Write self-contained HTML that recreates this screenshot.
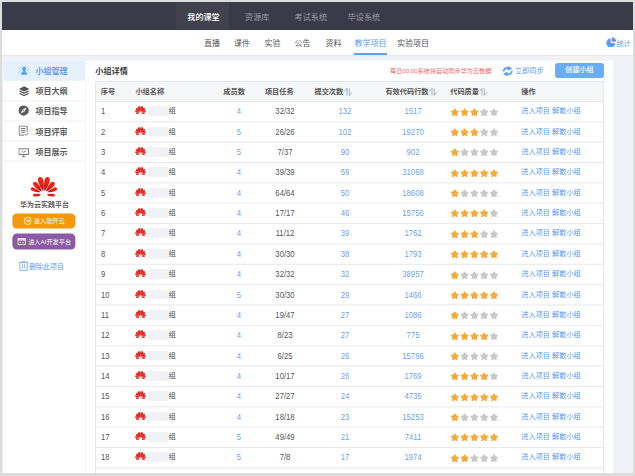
<!DOCTYPE html><html lang="zh"><head><meta charset="utf-8"><title>小组管理</title><style>
*{margin:0;padding:0;box-sizing:border-box}
html,body{width:635px;height:476px;overflow:hidden;background:#dcdcdc}
body{font-family:"Liberation Sans","Noto Sans CJK SC",sans-serif;position:relative;color:#444}
.a{position:absolute;white-space:nowrap}
#page{position:absolute;left:2px;top:2px;width:630.7px;height:471.2px;background:#f0f2f7;overflow:hidden}
#top{left:0;top:0;width:631px;height:28px;background:#3a3a48}
#top .act{left:174px;top:0;width:53px;height:28px;background:#42424f}
#top span{top:1.7px;height:28px;line-height:28px;font-size:8.1px;color:#9a9aa6;transform:translateX(-50%)}
#top span.on{color:#fff;font-weight:500}
#sub{left:0;top:28px;width:631px;height:25.5px;background:#fff;border-bottom:1px solid #e6e8ee}
#sub span{top:2.1px;height:24px;line-height:24px;font-size:8px;color:#555;transform:translateX(-50%)}
#sub span.on{color:#5b9cf0}
#side{left:1px;top:58px;transform:translate(0.4px,0.55px);width:82px;height:420px;background:#fff}
.si{left:0;width:82px;height:20.3px;border-bottom:1px solid #eef0f4;font-size:8px;font-weight:bold;color:#5c5c5c;line-height:20.6px}
.si b{position:absolute;left:32px;top:0.8px;font-weight:bold}
.si svg{position:absolute;left:15.3px;top:4.4px;width:11.5px;height:11.5px}
.si.on{background:#e6f1ff;color:#5b9cf0;border-bottom-color:#e6f1ff}
#main{left:82.8px;top:58px;transform:translateY(0.65px);width:528px;height:420px;background:#fff;border-left:1px solid #f5f6f8}
#tbl{left:92.8px;top:79.3px;width:509.2px;height:400px;border:1px solid #e6e7ea;border-bottom:0}
#thead{left:0;top:0;width:507.2px;height:19px;background:#f5f6f8}
.th{font-size:7.2px;font-weight:bold;color:#555;top:0;height:20px;line-height:20px}
.row{left:0;width:507.2px;font-size:8.4px;color:#555}
.row .a{top:-0.6px;height:20px;line-height:20px}
.c{transform:translateX(-50%) scaleX(0.92)}
.n{transform:scaleX(0.92);transform-origin:0 50%}
.bl{color:#6ba5ee}
.lk{font-size:7.2px;color:#5b9cf0}
.nm{font-size:7.3px;color:#555}
.blur{background:#f1f2f6;height:9.8px!important;top:4.4px!important}
</style></head><body><div id="page">
<div id="top" class="a"><div class="a act"></div>
<span class="a on" style="left:201.5px">我的课堂</span>
<span class="a" style="left:255.2px">资源库</span>
<span class="a" style="left:308.8px">考试系统</span>
<span class="a" style="left:361.9px">毕设系统</span>
</div>
<div id="sub" class="a">
<span class="a" style="left:210px">直播</span>
<span class="a" style="left:240px">课件</span>
<span class="a" style="left:270.5px">实验</span>
<span class="a" style="left:300.5px">公告</span>
<span class="a" style="left:331.5px">资料</span>
<span class="a on" style="left:368.5px">教学项目</span>
<span class="a" style="left:411px">实验项目</span>
<div class="a" style="left:352px;top:23.2px;width:33.4px;height:2.2px;background:#5ba2f3"></div>
<svg class="a" style="left:604px;top:6.5px;width:10.5px;height:10.5px" viewBox="0 0 20 20"><path d="M9 3 A8.5 8.5 0 1 0 17.5 12 L9 11 Z" fill="#5b9cf0"/><path d="M11 0.5 A8.5 8.5 0 0 1 19.5 9 L11 9 Z" fill="#5b9cf0"/></svg>
<span class="a" style="left:621.5px;font-size:7px;color:#5b9cf0">统计</span>
</div>
<div id="side" class="a">
<div class="a si on" style="top:0.00px"><svg viewBox="0 0 22 22" style="overflow:visible"><g fill="#5aa4f4"><ellipse cx="11" cy="7.8" rx="3.7" ry="4.2"/><path d="M5 19.5 C5 15.5 7 13.5 9.2 12.6 L8.8 10 L13.2 10 L13.2 12.6 C15 13.5 17 15.5 17 19.5 Z"/></g><g fill="none" stroke="#5aa4f4" stroke-width="1.5" opacity="0.55"><path d="M6.6 5.6 C4.6 4.6 2.6 6 2.6 8.2 C2.6 9.8 3.4 10.8 4.6 11.4 C2.4 12.6 0.6 14.6 0.2 17.6"/><path d="M15.4 5.6 C17.4 4.6 19.4 6 19.4 8.2 C19.4 9.8 18.6 10.8 17.4 11.4 C19.6 12.6 21.4 14.6 21.8 17.6"/></g></svg><b>小组管理</b></div>
<div class="a si" style="top:20.30px"><svg viewBox="0 0 22 22"><g fill="#555"><path d="M11 1.5 L21 6.5 L11 11.5 L1 6.5 Z"/><path d="M3.5 9.7 L1 11 L11 16 L21 11 L18.5 9.7 L11 13.5 Z"/><path d="M3.5 14.2 L1 15.5 L11 20.5 L21 15.5 L18.5 14.2 L11 18 Z"/></g></svg><b>项目大纲</b></div>
<div class="a si" style="top:40.60px"><svg viewBox="0 0 22 22"><circle cx="10" cy="9.4" r="9.9" fill="#5a5a5a"/><path d="M15.6 3.8 L11.8 11.2 L4.4 15 L8.2 7.6 Z" fill="#fff"/><circle cx="10" cy="9.4" r="1.3" fill="#5a5a5a"/></svg><b>项目指导</b></div>
<div class="a si" style="top:60.90px"><svg viewBox="0 0 22 22"><g fill="none" stroke="#5e5e5e" stroke-width="1.6"><path d="M16.8 12.5 V1 H1.4 V18.4 H11"/><path d="M5 5.6 H13.4 M5 9.2 H13.4 M5 12.8 H13.4"/><path d="M12.2 16.2 L14.8 18.8 L19.8 13.8"/></g></svg><b>项目评审</b></div>
<div class="a si" style="top:81.20px"><svg viewBox="0 0 22 22"><g fill="none" stroke="#5e5e5e" stroke-width="1.6"><rect x="1" y="4.4" width="18.4" height="10.6"/><path d="M10.2 15 V19.4 M6.6 19.6 H13.8"/><path d="M5.4 10.8 L8 9 L10.2 11.6 L12.4 8.6 L15 10.6" stroke-width="1.2"/></g></svg><b>项目展示</b></div>
<svg class="a" style="left:26.7px;top:115.8px;width:27px;height:20.5px" viewBox="0 0 40 30.5"><defs><linearGradient id="hg" x1="0" y1="0" x2="0" y2="1"><stop offset="0" stop-color="#ff2414"/><stop offset="0.5" stop-color="#f01a12"/><stop offset="1" stop-color="#9c0a08"/></linearGradient></defs><g fill="url(#hg)"><path d="M0,0 C-2.34,-4.80 -3.90,-10.90 -3.90,-16.57 C-3.90,-20.27 -2.18,-21.80 0,-21.80 C2.18,-21.80 3.90,-20.27 3.90,-16.57 C3.90,-10.90 2.34,-4.80 0,0 Z" transform="translate(19.00,22.00) rotate(-13.5)"/><path d="M0,0 C-1.98,-4.09 -3.30,-9.30 -3.30,-14.14 C-3.30,-17.30 -1.85,-18.60 0,-18.60 C1.85,-18.60 3.30,-17.30 3.30,-14.14 C3.30,-9.30 1.98,-4.09 0,0 Z" transform="translate(17.00,22.40) rotate(-41.0)"/><path d="M0,0 C-1.59,-3.43 -2.65,-7.80 -2.65,-11.86 C-2.65,-14.51 -1.48,-15.60 0,-15.60 C1.48,-15.60 2.65,-14.51 2.65,-11.86 C2.65,-7.80 1.59,-3.43 0,0 Z" transform="translate(15.00,23.50) rotate(-67.5)"/><path d="M0,0 C-1.50,-2.64 -2.50,-6.00 -2.50,-9.12 C-2.50,-11.16 -1.40,-12.00 0,-12.00 C1.40,-12.00 2.50,-11.16 2.50,-9.12 C2.50,-6.00 1.50,-2.64 0,0 Z" transform="translate(15.80,27.00) rotate(-97.0)"/><path d="M0,0 C-2.34,-4.80 -3.90,-10.90 -3.90,-16.57 C-3.90,-20.27 -2.18,-21.80 0,-21.80 C2.18,-21.80 3.90,-20.27 3.90,-16.57 C3.90,-10.90 2.34,-4.80 0,0 Z" transform="translate(21.00,22.00) rotate(13.5)"/><path d="M0,0 C-1.98,-4.09 -3.30,-9.30 -3.30,-14.14 C-3.30,-17.30 -1.85,-18.60 0,-18.60 C1.85,-18.60 3.30,-17.30 3.30,-14.14 C3.30,-9.30 1.98,-4.09 0,0 Z" transform="translate(23.00,22.40) rotate(41.0)"/><path d="M0,0 C-1.59,-3.43 -2.65,-7.80 -2.65,-11.86 C-2.65,-14.51 -1.48,-15.60 0,-15.60 C1.48,-15.60 2.65,-14.51 2.65,-11.86 C2.65,-7.80 1.59,-3.43 0,0 Z" transform="translate(25.00,23.50) rotate(67.5)"/><path d="M0,0 C-1.50,-2.64 -2.50,-6.00 -2.50,-9.12 C-2.50,-11.16 -1.40,-12.00 0,-12.00 C1.40,-12.00 2.50,-11.16 2.50,-9.12 C2.50,-6.00 1.50,-2.64 0,0 Z" transform="translate(24.20,27.00) rotate(97.0)"/></g></svg>
<div class="a" style="left:0;width:82px;top:138.8px;text-align:center;font-size:7px;font-weight:bold;color:#5a5a5a;line-height:9px">华为云实践平台</div>
<div class="a" style="left:9.1px;top:153.4px;width:63.4px;height:15px;border-radius:4.5px;background:#f49a08;color:#fff;font-size:6.2px;line-height:14.4px"><svg class="a" style="left:10.8px;top:3px;width:8.6px;height:8.6px" viewBox="0 0 16 16"><circle cx="8" cy="8" r="6.7" fill="none" stroke="#fff" stroke-width="1.6"/><path d="M4 8 H11 M8.5 5 L11.5 8 L8.5 11" fill="none" stroke="#fff" stroke-width="1.5"/></svg><span class="a" style="left:21.3px;top:0">进入软开云</span></div>
<div class="a" style="left:9.1px;top:173px;width:63.4px;height:15.5px;border-radius:4.5px;background:#8b59a6;color:#fff;font-size:6.2px;line-height:15.5px"><svg class="a" style="left:5.2px;top:3.5px;width:8.4px;height:8px" viewBox="0 0 16 15"><rect x="1" y="1.5" width="14" height="12" fill="none" stroke="#fff" stroke-width="1.6"/><path d="M1 4.5 H15" stroke="#fff" stroke-width="2.4"/><path d="M4 9.5 H7 M9 9.5 H12" stroke="#fff" stroke-width="1.4"/></svg><span class="a" style="left:15.7px;top:-0.3px">进入AI开发平台</span></div>
<svg class="a" style="left:15.3px;top:200.2px;width:10.4px;height:10.4px" viewBox="0 0 21 21"><path d="M0.5 3.8 H20.5 M8 3.8 V1.2 H13 V3.8 M3 3.8 V20 H18 V3.8 M8.2 7.5 V16.5 M12.8 7.5 V16.5" fill="none" stroke="#5b9ff2" stroke-width="1.5"/></svg>
<span class="a" style="left:25.6px;top:201px;font-size:7px;line-height:10px;color:#5b9cf0">删除此项目</span>
</div>
<div id="main" class="a"></div>
<div class="a" style="left:93.3px;top:64.3px;font-size:8.15px;font-weight:bold;color:#3a3a3a;line-height:12px">小组详情</div>
<div class="a" style="left:388px;top:64.2px;font-size:6.15px;color:#f46466;line-height:10px">每日00:00系统将自动同步华为云数据</div>
<svg class="a" style="left:499.8px;top:63.5px;width:11.4px;height:10.4px" viewBox="0 0 22 20"><g fill="none" stroke="#5ba2f3" stroke-width="3.6"><path d="M3 10.5 C3 5.5 8 2.8 13 4.2"/><path d="M19 9.5 C19 14.5 14 17.2 9 15.8"/></g><path d="M12.2 -0.3 L20.2 5.6 L11 8.8 Z" fill="#5ba2f3"/><path d="M9.8 20.3 L1.8 14.4 L11 11.2 Z" fill="#5ba2f3"/></svg>
<div class="a" style="left:513px;top:64px;font-size:7.15px;color:#5b9cf0;line-height:10px">立即同步</div>
<div class="a" style="left:553px;top:61px;width:49px;height:15px;border-radius:3px;background:#6aadf6;color:#fff;font-size:7.1px;font-weight:500;text-align:center;line-height:15.6px">创建小组</div>
<div id="tbl" class="a"><div id="thead" class="a">
<span class="a th" style="left:5px">序号</span>
<span class="a th" style="left:39.6px">小组名称</span>
<span class="a th" style="left:127.5px">成员数</span>
<span class="a th" style="left:169.1px">项目任务</span>
<span class="a th" style="left:218.7px">提交次数</span>
<span class="a th" style="left:289.6px">有效代码行数</span>
<span class="a th" style="left:354.4px">代码质量</span>
<span class="a th" style="left:425.5px">操作</span>
<svg class="a" style="left:246.8px;top:6px;width:9.5px;height:7.8px" viewBox="0 0 19 15.6"><path d="M8 1 V15 M8.3 0.8 L2.4 7.2" stroke="#5b9cf0" stroke-width="1.5" fill="none"/><path d="M12.6 0.6 V14.6 M12.3 14.8 L18.2 8.4" stroke="#9a9a9a" stroke-width="1.5" fill="none"/></svg>
<svg class="a" style="left:332.2px;top:6px;width:9.5px;height:7.8px" viewBox="0 0 19 15.6"><path d="M8 1 V15 M8.3 0.8 L2.4 7.2" stroke="#9a9a9a" stroke-width="1.5" fill="none"/><path d="M12.6 0.6 V14.6 M12.3 14.8 L18.2 8.4" stroke="#9a9a9a" stroke-width="1.5" fill="none"/></svg>
<svg class="a" style="left:382.4px;top:6px;width:9.5px;height:7.8px" viewBox="0 0 19 15.6"><path d="M8 1 V15 M8.3 0.8 L2.4 7.2" stroke="#9a9a9a" stroke-width="1.5" fill="none"/><path d="M12.6 0.6 V14.6 M12.3 14.8 L18.2 8.4" stroke="#9a9a9a" stroke-width="1.5" fill="none"/></svg>
</div>
<div class="a row" style="top:19.60px;height:20.36px">
<span class="a n" style="left:5px">1</span>
<svg class="a" style="left:39.4px;top:4.4px;width:11px;height:8.4px" viewBox="0 0 40 30.5"><g fill="#e8281f"><path d="M0,0 C-3.04,-4.80 -5.07,-10.90 -5.07,-16.57 C-5.07,-20.27 -2.84,-21.80 0,-21.80 C2.84,-21.80 5.07,-20.27 5.07,-16.57 C5.07,-10.90 3.04,-4.80 0,0 Z" transform="translate(18.70,22.00) rotate(-13.5)"/><path d="M0,0 C-2.57,-4.09 -4.29,-9.30 -4.29,-14.14 C-4.29,-17.30 -2.40,-18.60 0,-18.60 C2.40,-18.60 4.29,-17.30 4.29,-14.14 C4.29,-9.30 2.57,-4.09 0,0 Z" transform="translate(17.00,22.40) rotate(-41.0)"/><path d="M0,0 C-2.07,-3.43 -3.44,-7.80 -3.44,-11.86 C-3.44,-14.51 -1.93,-15.60 0,-15.60 C1.93,-15.60 3.44,-14.51 3.44,-11.86 C3.44,-7.80 2.07,-3.43 0,0 Z" transform="translate(15.00,23.50) rotate(-67.5)"/><path d="M0,0 C-1.95,-2.99 -3.25,-6.80 -3.25,-10.34 C-3.25,-12.65 -1.82,-13.60 0,-13.60 C1.82,-13.60 3.25,-12.65 3.25,-10.34 C3.25,-6.80 1.95,-2.99 0,0 Z" transform="translate(17.40,25.40) rotate(-92.2)"/><path d="M0,0 C-3.04,-4.80 -5.07,-10.90 -5.07,-16.57 C-5.07,-20.27 -2.84,-21.80 0,-21.80 C2.84,-21.80 5.07,-20.27 5.07,-16.57 C5.07,-10.90 3.04,-4.80 0,0 Z" transform="translate(21.30,22.00) rotate(13.5)"/><path d="M0,0 C-2.57,-4.09 -4.29,-9.30 -4.29,-14.14 C-4.29,-17.30 -2.40,-18.60 0,-18.60 C2.40,-18.60 4.29,-17.30 4.29,-14.14 C4.29,-9.30 2.57,-4.09 0,0 Z" transform="translate(23.00,22.40) rotate(41.0)"/><path d="M0,0 C-2.07,-3.43 -3.44,-7.80 -3.44,-11.86 C-3.44,-14.51 -1.93,-15.60 0,-15.60 C1.93,-15.60 3.44,-14.51 3.44,-11.86 C3.44,-7.80 2.07,-3.43 0,0 Z" transform="translate(25.00,23.50) rotate(67.5)"/><path d="M0,0 C-1.95,-2.99 -3.25,-6.80 -3.25,-10.34 C-3.25,-12.65 -1.82,-13.60 0,-13.60 C1.82,-13.60 3.25,-12.65 3.25,-10.34 C3.25,-6.80 1.95,-2.99 0,0 Z" transform="translate(22.60,25.40) rotate(92.2)"/></g></svg>
<span class="a blur" style="left:52.7px;width:20px"></span><span class="a nm" style="left:72.8px">组</span>
<span class="a c bl" style="left:143.5px">4</span>
<span class="a c" style="left:188.8px">32/32</span>
<span class="a c bl" style="left:249px">132</span>
<span class="a c bl" style="left:317px">1517</span>
<svg class="a" style="left:354.1px;top:4.8px;width:50px;height:10px" viewBox="0 0 50 10"><polygon points="4.80,1.95 5.93,3.95 8.18,4.40 6.62,6.09 6.89,8.37 4.80,7.42 2.71,8.37 2.98,6.09 1.42,4.40 3.67,3.95" fill="#f5aa3a" stroke="#f5aa3a" stroke-width="1.3" stroke-linejoin="round"/><polygon points="14.60,1.95 15.73,3.95 17.98,4.40 16.42,6.09 16.69,8.37 14.60,7.42 12.51,8.37 12.78,6.09 11.22,4.40 13.47,3.95" fill="#f5aa3a" stroke="#f5aa3a" stroke-width="1.3" stroke-linejoin="round"/><polygon points="24.40,1.95 25.53,3.95 27.78,4.40 26.22,6.09 26.49,8.37 24.40,7.42 22.31,8.37 22.58,6.09 21.02,4.40 23.27,3.95" fill="#f5aa3a" stroke="#f5aa3a" stroke-width="1.3" stroke-linejoin="round"/><polygon points="34.20,1.95 35.33,3.95 37.58,4.40 36.02,6.09 36.29,8.37 34.20,7.42 32.11,8.37 32.38,6.09 30.82,4.40 33.07,3.95" fill="#c8c8c8" stroke="#c8c8c8" stroke-width="1.3" stroke-linejoin="round"/><polygon points="44.00,1.95 45.13,3.95 47.38,4.40 45.82,6.09 46.09,8.37 44.00,7.42 41.91,8.37 42.18,6.09 40.62,4.40 42.87,3.95" fill="#c8c8c8" stroke="#c8c8c8" stroke-width="1.3" stroke-linejoin="round"/></svg>
<span class="a lk" style="left:425.5px">进入项目 解散小组</span>
</div>
<div class="a row" style="top:39.96px;height:20.36px">
<span class="a n" style="left:5px">2</span>
<svg class="a" style="left:39.4px;top:4.4px;width:11px;height:8.4px" viewBox="0 0 40 30.5"><g fill="#e8281f"><path d="M0,0 C-3.04,-4.80 -5.07,-10.90 -5.07,-16.57 C-5.07,-20.27 -2.84,-21.80 0,-21.80 C2.84,-21.80 5.07,-20.27 5.07,-16.57 C5.07,-10.90 3.04,-4.80 0,0 Z" transform="translate(18.70,22.00) rotate(-13.5)"/><path d="M0,0 C-2.57,-4.09 -4.29,-9.30 -4.29,-14.14 C-4.29,-17.30 -2.40,-18.60 0,-18.60 C2.40,-18.60 4.29,-17.30 4.29,-14.14 C4.29,-9.30 2.57,-4.09 0,0 Z" transform="translate(17.00,22.40) rotate(-41.0)"/><path d="M0,0 C-2.07,-3.43 -3.44,-7.80 -3.44,-11.86 C-3.44,-14.51 -1.93,-15.60 0,-15.60 C1.93,-15.60 3.44,-14.51 3.44,-11.86 C3.44,-7.80 2.07,-3.43 0,0 Z" transform="translate(15.00,23.50) rotate(-67.5)"/><path d="M0,0 C-1.95,-2.99 -3.25,-6.80 -3.25,-10.34 C-3.25,-12.65 -1.82,-13.60 0,-13.60 C1.82,-13.60 3.25,-12.65 3.25,-10.34 C3.25,-6.80 1.95,-2.99 0,0 Z" transform="translate(17.40,25.40) rotate(-92.2)"/><path d="M0,0 C-3.04,-4.80 -5.07,-10.90 -5.07,-16.57 C-5.07,-20.27 -2.84,-21.80 0,-21.80 C2.84,-21.80 5.07,-20.27 5.07,-16.57 C5.07,-10.90 3.04,-4.80 0,0 Z" transform="translate(21.30,22.00) rotate(13.5)"/><path d="M0,0 C-2.57,-4.09 -4.29,-9.30 -4.29,-14.14 C-4.29,-17.30 -2.40,-18.60 0,-18.60 C2.40,-18.60 4.29,-17.30 4.29,-14.14 C4.29,-9.30 2.57,-4.09 0,0 Z" transform="translate(23.00,22.40) rotate(41.0)"/><path d="M0,0 C-2.07,-3.43 -3.44,-7.80 -3.44,-11.86 C-3.44,-14.51 -1.93,-15.60 0,-15.60 C1.93,-15.60 3.44,-14.51 3.44,-11.86 C3.44,-7.80 2.07,-3.43 0,0 Z" transform="translate(25.00,23.50) rotate(67.5)"/><path d="M0,0 C-1.95,-2.99 -3.25,-6.80 -3.25,-10.34 C-3.25,-12.65 -1.82,-13.60 0,-13.60 C1.82,-13.60 3.25,-12.65 3.25,-10.34 C3.25,-6.80 1.95,-2.99 0,0 Z" transform="translate(22.60,25.40) rotate(92.2)"/></g></svg>
<span class="a blur" style="left:52.7px;width:20px"></span><span class="a nm" style="left:72.8px">组</span>
<span class="a c bl" style="left:143.5px">5</span>
<span class="a c" style="left:188.8px">26/26</span>
<span class="a c bl" style="left:249px">102</span>
<span class="a c bl" style="left:317px">19270</span>
<svg class="a" style="left:354.1px;top:4.8px;width:50px;height:10px" viewBox="0 0 50 10"><polygon points="4.80,1.95 5.93,3.95 8.18,4.40 6.62,6.09 6.89,8.37 4.80,7.42 2.71,8.37 2.98,6.09 1.42,4.40 3.67,3.95" fill="#f5aa3a" stroke="#f5aa3a" stroke-width="1.3" stroke-linejoin="round"/><polygon points="14.60,1.95 15.73,3.95 17.98,4.40 16.42,6.09 16.69,8.37 14.60,7.42 12.51,8.37 12.78,6.09 11.22,4.40 13.47,3.95" fill="#f5aa3a" stroke="#f5aa3a" stroke-width="1.3" stroke-linejoin="round"/><polygon points="24.40,1.95 25.53,3.95 27.78,4.40 26.22,6.09 26.49,8.37 24.40,7.42 22.31,8.37 22.58,6.09 21.02,4.40 23.27,3.95" fill="#f5aa3a" stroke="#f5aa3a" stroke-width="1.3" stroke-linejoin="round"/><polygon points="34.20,1.95 35.33,3.95 37.58,4.40 36.02,6.09 36.29,8.37 34.20,7.42 32.11,8.37 32.38,6.09 30.82,4.40 33.07,3.95" fill="#c8c8c8" stroke="#c8c8c8" stroke-width="1.3" stroke-linejoin="round"/><polygon points="44.00,1.95 45.13,3.95 47.38,4.40 45.82,6.09 46.09,8.37 44.00,7.42 41.91,8.37 42.18,6.09 40.62,4.40 42.87,3.95" fill="#c8c8c8" stroke="#c8c8c8" stroke-width="1.3" stroke-linejoin="round"/></svg>
<span class="a lk" style="left:425.5px">进入项目 解散小组</span>
</div>
<div class="a row" style="top:60.32px;height:20.36px">
<span class="a n" style="left:5px">3</span>
<svg class="a" style="left:39.4px;top:4.4px;width:11px;height:8.4px" viewBox="0 0 40 30.5"><g fill="#e8281f"><path d="M0,0 C-3.04,-4.80 -5.07,-10.90 -5.07,-16.57 C-5.07,-20.27 -2.84,-21.80 0,-21.80 C2.84,-21.80 5.07,-20.27 5.07,-16.57 C5.07,-10.90 3.04,-4.80 0,0 Z" transform="translate(18.70,22.00) rotate(-13.5)"/><path d="M0,0 C-2.57,-4.09 -4.29,-9.30 -4.29,-14.14 C-4.29,-17.30 -2.40,-18.60 0,-18.60 C2.40,-18.60 4.29,-17.30 4.29,-14.14 C4.29,-9.30 2.57,-4.09 0,0 Z" transform="translate(17.00,22.40) rotate(-41.0)"/><path d="M0,0 C-2.07,-3.43 -3.44,-7.80 -3.44,-11.86 C-3.44,-14.51 -1.93,-15.60 0,-15.60 C1.93,-15.60 3.44,-14.51 3.44,-11.86 C3.44,-7.80 2.07,-3.43 0,0 Z" transform="translate(15.00,23.50) rotate(-67.5)"/><path d="M0,0 C-1.95,-2.99 -3.25,-6.80 -3.25,-10.34 C-3.25,-12.65 -1.82,-13.60 0,-13.60 C1.82,-13.60 3.25,-12.65 3.25,-10.34 C3.25,-6.80 1.95,-2.99 0,0 Z" transform="translate(17.40,25.40) rotate(-92.2)"/><path d="M0,0 C-3.04,-4.80 -5.07,-10.90 -5.07,-16.57 C-5.07,-20.27 -2.84,-21.80 0,-21.80 C2.84,-21.80 5.07,-20.27 5.07,-16.57 C5.07,-10.90 3.04,-4.80 0,0 Z" transform="translate(21.30,22.00) rotate(13.5)"/><path d="M0,0 C-2.57,-4.09 -4.29,-9.30 -4.29,-14.14 C-4.29,-17.30 -2.40,-18.60 0,-18.60 C2.40,-18.60 4.29,-17.30 4.29,-14.14 C4.29,-9.30 2.57,-4.09 0,0 Z" transform="translate(23.00,22.40) rotate(41.0)"/><path d="M0,0 C-2.07,-3.43 -3.44,-7.80 -3.44,-11.86 C-3.44,-14.51 -1.93,-15.60 0,-15.60 C1.93,-15.60 3.44,-14.51 3.44,-11.86 C3.44,-7.80 2.07,-3.43 0,0 Z" transform="translate(25.00,23.50) rotate(67.5)"/><path d="M0,0 C-1.95,-2.99 -3.25,-6.80 -3.25,-10.34 C-3.25,-12.65 -1.82,-13.60 0,-13.60 C1.82,-13.60 3.25,-12.65 3.25,-10.34 C3.25,-6.80 1.95,-2.99 0,0 Z" transform="translate(22.60,25.40) rotate(92.2)"/></g></svg>
<span class="a blur" style="left:52.7px;width:20px"></span><span class="a nm" style="left:72.8px">组</span>
<span class="a c bl" style="left:143.5px">5</span>
<span class="a c" style="left:188.8px">7/37</span>
<span class="a c bl" style="left:249px">90</span>
<span class="a c bl" style="left:317px">902</span>
<svg class="a" style="left:354.1px;top:4.8px;width:50px;height:10px" viewBox="0 0 50 10"><polygon points="4.80,1.95 5.93,3.95 8.18,4.40 6.62,6.09 6.89,8.37 4.80,7.42 2.71,8.37 2.98,6.09 1.42,4.40 3.67,3.95" fill="#f5aa3a" stroke="#f5aa3a" stroke-width="1.3" stroke-linejoin="round"/><polygon points="14.60,1.95 15.73,3.95 17.98,4.40 16.42,6.09 16.69,8.37 14.60,7.42 12.51,8.37 12.78,6.09 11.22,4.40 13.47,3.95" fill="#c8c8c8" stroke="#c8c8c8" stroke-width="1.3" stroke-linejoin="round"/><polygon points="24.40,1.95 25.53,3.95 27.78,4.40 26.22,6.09 26.49,8.37 24.40,7.42 22.31,8.37 22.58,6.09 21.02,4.40 23.27,3.95" fill="#c8c8c8" stroke="#c8c8c8" stroke-width="1.3" stroke-linejoin="round"/><polygon points="34.20,1.95 35.33,3.95 37.58,4.40 36.02,6.09 36.29,8.37 34.20,7.42 32.11,8.37 32.38,6.09 30.82,4.40 33.07,3.95" fill="#c8c8c8" stroke="#c8c8c8" stroke-width="1.3" stroke-linejoin="round"/><polygon points="44.00,1.95 45.13,3.95 47.38,4.40 45.82,6.09 46.09,8.37 44.00,7.42 41.91,8.37 42.18,6.09 40.62,4.40 42.87,3.95" fill="#c8c8c8" stroke="#c8c8c8" stroke-width="1.3" stroke-linejoin="round"/></svg>
<span class="a lk" style="left:425.5px">进入项目 解散小组</span>
</div>
<div class="a row" style="top:80.68px;height:20.36px">
<span class="a n" style="left:5px">4</span>
<svg class="a" style="left:39.4px;top:4.4px;width:11px;height:8.4px" viewBox="0 0 40 30.5"><g fill="#e8281f"><path d="M0,0 C-3.04,-4.80 -5.07,-10.90 -5.07,-16.57 C-5.07,-20.27 -2.84,-21.80 0,-21.80 C2.84,-21.80 5.07,-20.27 5.07,-16.57 C5.07,-10.90 3.04,-4.80 0,0 Z" transform="translate(18.70,22.00) rotate(-13.5)"/><path d="M0,0 C-2.57,-4.09 -4.29,-9.30 -4.29,-14.14 C-4.29,-17.30 -2.40,-18.60 0,-18.60 C2.40,-18.60 4.29,-17.30 4.29,-14.14 C4.29,-9.30 2.57,-4.09 0,0 Z" transform="translate(17.00,22.40) rotate(-41.0)"/><path d="M0,0 C-2.07,-3.43 -3.44,-7.80 -3.44,-11.86 C-3.44,-14.51 -1.93,-15.60 0,-15.60 C1.93,-15.60 3.44,-14.51 3.44,-11.86 C3.44,-7.80 2.07,-3.43 0,0 Z" transform="translate(15.00,23.50) rotate(-67.5)"/><path d="M0,0 C-1.95,-2.99 -3.25,-6.80 -3.25,-10.34 C-3.25,-12.65 -1.82,-13.60 0,-13.60 C1.82,-13.60 3.25,-12.65 3.25,-10.34 C3.25,-6.80 1.95,-2.99 0,0 Z" transform="translate(17.40,25.40) rotate(-92.2)"/><path d="M0,0 C-3.04,-4.80 -5.07,-10.90 -5.07,-16.57 C-5.07,-20.27 -2.84,-21.80 0,-21.80 C2.84,-21.80 5.07,-20.27 5.07,-16.57 C5.07,-10.90 3.04,-4.80 0,0 Z" transform="translate(21.30,22.00) rotate(13.5)"/><path d="M0,0 C-2.57,-4.09 -4.29,-9.30 -4.29,-14.14 C-4.29,-17.30 -2.40,-18.60 0,-18.60 C2.40,-18.60 4.29,-17.30 4.29,-14.14 C4.29,-9.30 2.57,-4.09 0,0 Z" transform="translate(23.00,22.40) rotate(41.0)"/><path d="M0,0 C-2.07,-3.43 -3.44,-7.80 -3.44,-11.86 C-3.44,-14.51 -1.93,-15.60 0,-15.60 C1.93,-15.60 3.44,-14.51 3.44,-11.86 C3.44,-7.80 2.07,-3.43 0,0 Z" transform="translate(25.00,23.50) rotate(67.5)"/><path d="M0,0 C-1.95,-2.99 -3.25,-6.80 -3.25,-10.34 C-3.25,-12.65 -1.82,-13.60 0,-13.60 C1.82,-13.60 3.25,-12.65 3.25,-10.34 C3.25,-6.80 1.95,-2.99 0,0 Z" transform="translate(22.60,25.40) rotate(92.2)"/></g></svg>
<span class="a blur" style="left:52.7px;width:20px"></span><span class="a nm" style="left:72.8px">组</span>
<span class="a c bl" style="left:143.5px">4</span>
<span class="a c" style="left:188.8px">39/39</span>
<span class="a c bl" style="left:249px">59</span>
<span class="a c bl" style="left:317px">31068</span>
<svg class="a" style="left:354.1px;top:4.8px;width:50px;height:10px" viewBox="0 0 50 10"><polygon points="4.80,1.95 5.93,3.95 8.18,4.40 6.62,6.09 6.89,8.37 4.80,7.42 2.71,8.37 2.98,6.09 1.42,4.40 3.67,3.95" fill="#f5aa3a" stroke="#f5aa3a" stroke-width="1.3" stroke-linejoin="round"/><polygon points="14.60,1.95 15.73,3.95 17.98,4.40 16.42,6.09 16.69,8.37 14.60,7.42 12.51,8.37 12.78,6.09 11.22,4.40 13.47,3.95" fill="#f5aa3a" stroke="#f5aa3a" stroke-width="1.3" stroke-linejoin="round"/><polygon points="24.40,1.95 25.53,3.95 27.78,4.40 26.22,6.09 26.49,8.37 24.40,7.42 22.31,8.37 22.58,6.09 21.02,4.40 23.27,3.95" fill="#f5aa3a" stroke="#f5aa3a" stroke-width="1.3" stroke-linejoin="round"/><polygon points="34.20,1.95 35.33,3.95 37.58,4.40 36.02,6.09 36.29,8.37 34.20,7.42 32.11,8.37 32.38,6.09 30.82,4.40 33.07,3.95" fill="#f5aa3a" stroke="#f5aa3a" stroke-width="1.3" stroke-linejoin="round"/><polygon points="44.00,1.95 45.13,3.95 47.38,4.40 45.82,6.09 46.09,8.37 44.00,7.42 41.91,8.37 42.18,6.09 40.62,4.40 42.87,3.95" fill="#f5aa3a" stroke="#f5aa3a" stroke-width="1.3" stroke-linejoin="round"/></svg>
<span class="a lk" style="left:425.5px">进入项目 解散小组</span>
</div>
<div class="a row" style="top:101.04px;height:20.36px">
<span class="a n" style="left:5px">5</span>
<svg class="a" style="left:39.4px;top:4.4px;width:11px;height:8.4px" viewBox="0 0 40 30.5"><g fill="#e8281f"><path d="M0,0 C-3.04,-4.80 -5.07,-10.90 -5.07,-16.57 C-5.07,-20.27 -2.84,-21.80 0,-21.80 C2.84,-21.80 5.07,-20.27 5.07,-16.57 C5.07,-10.90 3.04,-4.80 0,0 Z" transform="translate(18.70,22.00) rotate(-13.5)"/><path d="M0,0 C-2.57,-4.09 -4.29,-9.30 -4.29,-14.14 C-4.29,-17.30 -2.40,-18.60 0,-18.60 C2.40,-18.60 4.29,-17.30 4.29,-14.14 C4.29,-9.30 2.57,-4.09 0,0 Z" transform="translate(17.00,22.40) rotate(-41.0)"/><path d="M0,0 C-2.07,-3.43 -3.44,-7.80 -3.44,-11.86 C-3.44,-14.51 -1.93,-15.60 0,-15.60 C1.93,-15.60 3.44,-14.51 3.44,-11.86 C3.44,-7.80 2.07,-3.43 0,0 Z" transform="translate(15.00,23.50) rotate(-67.5)"/><path d="M0,0 C-1.95,-2.99 -3.25,-6.80 -3.25,-10.34 C-3.25,-12.65 -1.82,-13.60 0,-13.60 C1.82,-13.60 3.25,-12.65 3.25,-10.34 C3.25,-6.80 1.95,-2.99 0,0 Z" transform="translate(17.40,25.40) rotate(-92.2)"/><path d="M0,0 C-3.04,-4.80 -5.07,-10.90 -5.07,-16.57 C-5.07,-20.27 -2.84,-21.80 0,-21.80 C2.84,-21.80 5.07,-20.27 5.07,-16.57 C5.07,-10.90 3.04,-4.80 0,0 Z" transform="translate(21.30,22.00) rotate(13.5)"/><path d="M0,0 C-2.57,-4.09 -4.29,-9.30 -4.29,-14.14 C-4.29,-17.30 -2.40,-18.60 0,-18.60 C2.40,-18.60 4.29,-17.30 4.29,-14.14 C4.29,-9.30 2.57,-4.09 0,0 Z" transform="translate(23.00,22.40) rotate(41.0)"/><path d="M0,0 C-2.07,-3.43 -3.44,-7.80 -3.44,-11.86 C-3.44,-14.51 -1.93,-15.60 0,-15.60 C1.93,-15.60 3.44,-14.51 3.44,-11.86 C3.44,-7.80 2.07,-3.43 0,0 Z" transform="translate(25.00,23.50) rotate(67.5)"/><path d="M0,0 C-1.95,-2.99 -3.25,-6.80 -3.25,-10.34 C-3.25,-12.65 -1.82,-13.60 0,-13.60 C1.82,-13.60 3.25,-12.65 3.25,-10.34 C3.25,-6.80 1.95,-2.99 0,0 Z" transform="translate(22.60,25.40) rotate(92.2)"/></g></svg>
<span class="a blur" style="left:52.7px;width:20px"></span><span class="a nm" style="left:72.8px">组</span>
<span class="a c bl" style="left:143.5px">4</span>
<span class="a c" style="left:188.8px">64/64</span>
<span class="a c bl" style="left:249px">50</span>
<span class="a c bl" style="left:317px">18608</span>
<svg class="a" style="left:354.1px;top:4.8px;width:50px;height:10px" viewBox="0 0 50 10"><polygon points="4.80,1.95 5.93,3.95 8.18,4.40 6.62,6.09 6.89,8.37 4.80,7.42 2.71,8.37 2.98,6.09 1.42,4.40 3.67,3.95" fill="#f5aa3a" stroke="#f5aa3a" stroke-width="1.3" stroke-linejoin="round"/><polygon points="14.60,1.95 15.73,3.95 17.98,4.40 16.42,6.09 16.69,8.37 14.60,7.42 12.51,8.37 12.78,6.09 11.22,4.40 13.47,3.95" fill="#c8c8c8" stroke="#c8c8c8" stroke-width="1.3" stroke-linejoin="round"/><polygon points="24.40,1.95 25.53,3.95 27.78,4.40 26.22,6.09 26.49,8.37 24.40,7.42 22.31,8.37 22.58,6.09 21.02,4.40 23.27,3.95" fill="#c8c8c8" stroke="#c8c8c8" stroke-width="1.3" stroke-linejoin="round"/><polygon points="34.20,1.95 35.33,3.95 37.58,4.40 36.02,6.09 36.29,8.37 34.20,7.42 32.11,8.37 32.38,6.09 30.82,4.40 33.07,3.95" fill="#c8c8c8" stroke="#c8c8c8" stroke-width="1.3" stroke-linejoin="round"/><polygon points="44.00,1.95 45.13,3.95 47.38,4.40 45.82,6.09 46.09,8.37 44.00,7.42 41.91,8.37 42.18,6.09 40.62,4.40 42.87,3.95" fill="#c8c8c8" stroke="#c8c8c8" stroke-width="1.3" stroke-linejoin="round"/></svg>
<span class="a lk" style="left:425.5px">进入项目 解散小组</span>
</div>
<div class="a row" style="top:121.40px;height:20.36px">
<span class="a n" style="left:5px">6</span>
<svg class="a" style="left:39.4px;top:4.4px;width:11px;height:8.4px" viewBox="0 0 40 30.5"><g fill="#e8281f"><path d="M0,0 C-3.04,-4.80 -5.07,-10.90 -5.07,-16.57 C-5.07,-20.27 -2.84,-21.80 0,-21.80 C2.84,-21.80 5.07,-20.27 5.07,-16.57 C5.07,-10.90 3.04,-4.80 0,0 Z" transform="translate(18.70,22.00) rotate(-13.5)"/><path d="M0,0 C-2.57,-4.09 -4.29,-9.30 -4.29,-14.14 C-4.29,-17.30 -2.40,-18.60 0,-18.60 C2.40,-18.60 4.29,-17.30 4.29,-14.14 C4.29,-9.30 2.57,-4.09 0,0 Z" transform="translate(17.00,22.40) rotate(-41.0)"/><path d="M0,0 C-2.07,-3.43 -3.44,-7.80 -3.44,-11.86 C-3.44,-14.51 -1.93,-15.60 0,-15.60 C1.93,-15.60 3.44,-14.51 3.44,-11.86 C3.44,-7.80 2.07,-3.43 0,0 Z" transform="translate(15.00,23.50) rotate(-67.5)"/><path d="M0,0 C-1.95,-2.99 -3.25,-6.80 -3.25,-10.34 C-3.25,-12.65 -1.82,-13.60 0,-13.60 C1.82,-13.60 3.25,-12.65 3.25,-10.34 C3.25,-6.80 1.95,-2.99 0,0 Z" transform="translate(17.40,25.40) rotate(-92.2)"/><path d="M0,0 C-3.04,-4.80 -5.07,-10.90 -5.07,-16.57 C-5.07,-20.27 -2.84,-21.80 0,-21.80 C2.84,-21.80 5.07,-20.27 5.07,-16.57 C5.07,-10.90 3.04,-4.80 0,0 Z" transform="translate(21.30,22.00) rotate(13.5)"/><path d="M0,0 C-2.57,-4.09 -4.29,-9.30 -4.29,-14.14 C-4.29,-17.30 -2.40,-18.60 0,-18.60 C2.40,-18.60 4.29,-17.30 4.29,-14.14 C4.29,-9.30 2.57,-4.09 0,0 Z" transform="translate(23.00,22.40) rotate(41.0)"/><path d="M0,0 C-2.07,-3.43 -3.44,-7.80 -3.44,-11.86 C-3.44,-14.51 -1.93,-15.60 0,-15.60 C1.93,-15.60 3.44,-14.51 3.44,-11.86 C3.44,-7.80 2.07,-3.43 0,0 Z" transform="translate(25.00,23.50) rotate(67.5)"/><path d="M0,0 C-1.95,-2.99 -3.25,-6.80 -3.25,-10.34 C-3.25,-12.65 -1.82,-13.60 0,-13.60 C1.82,-13.60 3.25,-12.65 3.25,-10.34 C3.25,-6.80 1.95,-2.99 0,0 Z" transform="translate(22.60,25.40) rotate(92.2)"/></g></svg>
<span class="a blur" style="left:52.7px;width:20px"></span><span class="a nm" style="left:72.8px">组</span>
<span class="a c bl" style="left:143.5px">4</span>
<span class="a c" style="left:188.8px">17/17</span>
<span class="a c bl" style="left:249px">46</span>
<span class="a c bl" style="left:317px">15756</span>
<svg class="a" style="left:354.1px;top:4.8px;width:50px;height:10px" viewBox="0 0 50 10"><polygon points="4.80,1.95 5.93,3.95 8.18,4.40 6.62,6.09 6.89,8.37 4.80,7.42 2.71,8.37 2.98,6.09 1.42,4.40 3.67,3.95" fill="#f5aa3a" stroke="#f5aa3a" stroke-width="1.3" stroke-linejoin="round"/><polygon points="14.60,1.95 15.73,3.95 17.98,4.40 16.42,6.09 16.69,8.37 14.60,7.42 12.51,8.37 12.78,6.09 11.22,4.40 13.47,3.95" fill="#f5aa3a" stroke="#f5aa3a" stroke-width="1.3" stroke-linejoin="round"/><polygon points="24.40,1.95 25.53,3.95 27.78,4.40 26.22,6.09 26.49,8.37 24.40,7.42 22.31,8.37 22.58,6.09 21.02,4.40 23.27,3.95" fill="#f5aa3a" stroke="#f5aa3a" stroke-width="1.3" stroke-linejoin="round"/><polygon points="34.20,1.95 35.33,3.95 37.58,4.40 36.02,6.09 36.29,8.37 34.20,7.42 32.11,8.37 32.38,6.09 30.82,4.40 33.07,3.95" fill="#f5aa3a" stroke="#f5aa3a" stroke-width="1.3" stroke-linejoin="round"/><polygon points="44.00,1.95 45.13,3.95 47.38,4.40 45.82,6.09 46.09,8.37 44.00,7.42 41.91,8.37 42.18,6.09 40.62,4.40 42.87,3.95" fill="#c8c8c8" stroke="#c8c8c8" stroke-width="1.3" stroke-linejoin="round"/></svg>
<span class="a lk" style="left:425.5px">进入项目 解散小组</span>
</div>
<div class="a row" style="top:141.76px;height:20.36px">
<span class="a n" style="left:5px">7</span>
<svg class="a" style="left:39.4px;top:4.4px;width:11px;height:8.4px" viewBox="0 0 40 30.5"><g fill="#e8281f"><path d="M0,0 C-3.04,-4.80 -5.07,-10.90 -5.07,-16.57 C-5.07,-20.27 -2.84,-21.80 0,-21.80 C2.84,-21.80 5.07,-20.27 5.07,-16.57 C5.07,-10.90 3.04,-4.80 0,0 Z" transform="translate(18.70,22.00) rotate(-13.5)"/><path d="M0,0 C-2.57,-4.09 -4.29,-9.30 -4.29,-14.14 C-4.29,-17.30 -2.40,-18.60 0,-18.60 C2.40,-18.60 4.29,-17.30 4.29,-14.14 C4.29,-9.30 2.57,-4.09 0,0 Z" transform="translate(17.00,22.40) rotate(-41.0)"/><path d="M0,0 C-2.07,-3.43 -3.44,-7.80 -3.44,-11.86 C-3.44,-14.51 -1.93,-15.60 0,-15.60 C1.93,-15.60 3.44,-14.51 3.44,-11.86 C3.44,-7.80 2.07,-3.43 0,0 Z" transform="translate(15.00,23.50) rotate(-67.5)"/><path d="M0,0 C-1.95,-2.99 -3.25,-6.80 -3.25,-10.34 C-3.25,-12.65 -1.82,-13.60 0,-13.60 C1.82,-13.60 3.25,-12.65 3.25,-10.34 C3.25,-6.80 1.95,-2.99 0,0 Z" transform="translate(17.40,25.40) rotate(-92.2)"/><path d="M0,0 C-3.04,-4.80 -5.07,-10.90 -5.07,-16.57 C-5.07,-20.27 -2.84,-21.80 0,-21.80 C2.84,-21.80 5.07,-20.27 5.07,-16.57 C5.07,-10.90 3.04,-4.80 0,0 Z" transform="translate(21.30,22.00) rotate(13.5)"/><path d="M0,0 C-2.57,-4.09 -4.29,-9.30 -4.29,-14.14 C-4.29,-17.30 -2.40,-18.60 0,-18.60 C2.40,-18.60 4.29,-17.30 4.29,-14.14 C4.29,-9.30 2.57,-4.09 0,0 Z" transform="translate(23.00,22.40) rotate(41.0)"/><path d="M0,0 C-2.07,-3.43 -3.44,-7.80 -3.44,-11.86 C-3.44,-14.51 -1.93,-15.60 0,-15.60 C1.93,-15.60 3.44,-14.51 3.44,-11.86 C3.44,-7.80 2.07,-3.43 0,0 Z" transform="translate(25.00,23.50) rotate(67.5)"/><path d="M0,0 C-1.95,-2.99 -3.25,-6.80 -3.25,-10.34 C-3.25,-12.65 -1.82,-13.60 0,-13.60 C1.82,-13.60 3.25,-12.65 3.25,-10.34 C3.25,-6.80 1.95,-2.99 0,0 Z" transform="translate(22.60,25.40) rotate(92.2)"/></g></svg>
<span class="a blur" style="left:52.7px;width:20px"></span><span class="a nm" style="left:72.8px">组</span>
<span class="a c bl" style="left:143.5px">4</span>
<span class="a c" style="left:188.8px">11/12</span>
<span class="a c bl" style="left:249px">39</span>
<span class="a c bl" style="left:317px">1762</span>
<svg class="a" style="left:354.1px;top:4.8px;width:50px;height:10px" viewBox="0 0 50 10"><polygon points="4.80,1.95 5.93,3.95 8.18,4.40 6.62,6.09 6.89,8.37 4.80,7.42 2.71,8.37 2.98,6.09 1.42,4.40 3.67,3.95" fill="#f5aa3a" stroke="#f5aa3a" stroke-width="1.3" stroke-linejoin="round"/><polygon points="14.60,1.95 15.73,3.95 17.98,4.40 16.42,6.09 16.69,8.37 14.60,7.42 12.51,8.37 12.78,6.09 11.22,4.40 13.47,3.95" fill="#f5aa3a" stroke="#f5aa3a" stroke-width="1.3" stroke-linejoin="round"/><polygon points="24.40,1.95 25.53,3.95 27.78,4.40 26.22,6.09 26.49,8.37 24.40,7.42 22.31,8.37 22.58,6.09 21.02,4.40 23.27,3.95" fill="#f5aa3a" stroke="#f5aa3a" stroke-width="1.3" stroke-linejoin="round"/><polygon points="34.20,1.95 35.33,3.95 37.58,4.40 36.02,6.09 36.29,8.37 34.20,7.42 32.11,8.37 32.38,6.09 30.82,4.40 33.07,3.95" fill="#c8c8c8" stroke="#c8c8c8" stroke-width="1.3" stroke-linejoin="round"/><polygon points="44.00,1.95 45.13,3.95 47.38,4.40 45.82,6.09 46.09,8.37 44.00,7.42 41.91,8.37 42.18,6.09 40.62,4.40 42.87,3.95" fill="#c8c8c8" stroke="#c8c8c8" stroke-width="1.3" stroke-linejoin="round"/></svg>
<span class="a lk" style="left:425.5px">进入项目 解散小组</span>
</div>
<div class="a row" style="top:162.12px;height:20.36px">
<span class="a n" style="left:5px">8</span>
<svg class="a" style="left:39.4px;top:4.4px;width:11px;height:8.4px" viewBox="0 0 40 30.5"><g fill="#e8281f"><path d="M0,0 C-3.04,-4.80 -5.07,-10.90 -5.07,-16.57 C-5.07,-20.27 -2.84,-21.80 0,-21.80 C2.84,-21.80 5.07,-20.27 5.07,-16.57 C5.07,-10.90 3.04,-4.80 0,0 Z" transform="translate(18.70,22.00) rotate(-13.5)"/><path d="M0,0 C-2.57,-4.09 -4.29,-9.30 -4.29,-14.14 C-4.29,-17.30 -2.40,-18.60 0,-18.60 C2.40,-18.60 4.29,-17.30 4.29,-14.14 C4.29,-9.30 2.57,-4.09 0,0 Z" transform="translate(17.00,22.40) rotate(-41.0)"/><path d="M0,0 C-2.07,-3.43 -3.44,-7.80 -3.44,-11.86 C-3.44,-14.51 -1.93,-15.60 0,-15.60 C1.93,-15.60 3.44,-14.51 3.44,-11.86 C3.44,-7.80 2.07,-3.43 0,0 Z" transform="translate(15.00,23.50) rotate(-67.5)"/><path d="M0,0 C-1.95,-2.99 -3.25,-6.80 -3.25,-10.34 C-3.25,-12.65 -1.82,-13.60 0,-13.60 C1.82,-13.60 3.25,-12.65 3.25,-10.34 C3.25,-6.80 1.95,-2.99 0,0 Z" transform="translate(17.40,25.40) rotate(-92.2)"/><path d="M0,0 C-3.04,-4.80 -5.07,-10.90 -5.07,-16.57 C-5.07,-20.27 -2.84,-21.80 0,-21.80 C2.84,-21.80 5.07,-20.27 5.07,-16.57 C5.07,-10.90 3.04,-4.80 0,0 Z" transform="translate(21.30,22.00) rotate(13.5)"/><path d="M0,0 C-2.57,-4.09 -4.29,-9.30 -4.29,-14.14 C-4.29,-17.30 -2.40,-18.60 0,-18.60 C2.40,-18.60 4.29,-17.30 4.29,-14.14 C4.29,-9.30 2.57,-4.09 0,0 Z" transform="translate(23.00,22.40) rotate(41.0)"/><path d="M0,0 C-2.07,-3.43 -3.44,-7.80 -3.44,-11.86 C-3.44,-14.51 -1.93,-15.60 0,-15.60 C1.93,-15.60 3.44,-14.51 3.44,-11.86 C3.44,-7.80 2.07,-3.43 0,0 Z" transform="translate(25.00,23.50) rotate(67.5)"/><path d="M0,0 C-1.95,-2.99 -3.25,-6.80 -3.25,-10.34 C-3.25,-12.65 -1.82,-13.60 0,-13.60 C1.82,-13.60 3.25,-12.65 3.25,-10.34 C3.25,-6.80 1.95,-2.99 0,0 Z" transform="translate(22.60,25.40) rotate(92.2)"/></g></svg>
<span class="a blur" style="left:52.7px;width:20px"></span><span class="a nm" style="left:72.8px">组</span>
<span class="a c bl" style="left:143.5px">4</span>
<span class="a c" style="left:188.8px">30/30</span>
<span class="a c bl" style="left:249px">38</span>
<span class="a c bl" style="left:317px">1793</span>
<svg class="a" style="left:354.1px;top:4.8px;width:50px;height:10px" viewBox="0 0 50 10"><polygon points="4.80,1.95 5.93,3.95 8.18,4.40 6.62,6.09 6.89,8.37 4.80,7.42 2.71,8.37 2.98,6.09 1.42,4.40 3.67,3.95" fill="#f5aa3a" stroke="#f5aa3a" stroke-width="1.3" stroke-linejoin="round"/><polygon points="14.60,1.95 15.73,3.95 17.98,4.40 16.42,6.09 16.69,8.37 14.60,7.42 12.51,8.37 12.78,6.09 11.22,4.40 13.47,3.95" fill="#f5aa3a" stroke="#f5aa3a" stroke-width="1.3" stroke-linejoin="round"/><polygon points="24.40,1.95 25.53,3.95 27.78,4.40 26.22,6.09 26.49,8.37 24.40,7.42 22.31,8.37 22.58,6.09 21.02,4.40 23.27,3.95" fill="#f5aa3a" stroke="#f5aa3a" stroke-width="1.3" stroke-linejoin="round"/><polygon points="34.20,1.95 35.33,3.95 37.58,4.40 36.02,6.09 36.29,8.37 34.20,7.42 32.11,8.37 32.38,6.09 30.82,4.40 33.07,3.95" fill="#f5aa3a" stroke="#f5aa3a" stroke-width="1.3" stroke-linejoin="round"/><polygon points="44.00,1.95 45.13,3.95 47.38,4.40 45.82,6.09 46.09,8.37 44.00,7.42 41.91,8.37 42.18,6.09 40.62,4.40 42.87,3.95" fill="#f5aa3a" stroke="#f5aa3a" stroke-width="1.3" stroke-linejoin="round"/></svg>
<span class="a lk" style="left:425.5px">进入项目 解散小组</span>
</div>
<div class="a row" style="top:182.48px;height:20.36px">
<span class="a n" style="left:5px">9</span>
<svg class="a" style="left:39.4px;top:4.4px;width:11px;height:8.4px" viewBox="0 0 40 30.5"><g fill="#e8281f"><path d="M0,0 C-3.04,-4.80 -5.07,-10.90 -5.07,-16.57 C-5.07,-20.27 -2.84,-21.80 0,-21.80 C2.84,-21.80 5.07,-20.27 5.07,-16.57 C5.07,-10.90 3.04,-4.80 0,0 Z" transform="translate(18.70,22.00) rotate(-13.5)"/><path d="M0,0 C-2.57,-4.09 -4.29,-9.30 -4.29,-14.14 C-4.29,-17.30 -2.40,-18.60 0,-18.60 C2.40,-18.60 4.29,-17.30 4.29,-14.14 C4.29,-9.30 2.57,-4.09 0,0 Z" transform="translate(17.00,22.40) rotate(-41.0)"/><path d="M0,0 C-2.07,-3.43 -3.44,-7.80 -3.44,-11.86 C-3.44,-14.51 -1.93,-15.60 0,-15.60 C1.93,-15.60 3.44,-14.51 3.44,-11.86 C3.44,-7.80 2.07,-3.43 0,0 Z" transform="translate(15.00,23.50) rotate(-67.5)"/><path d="M0,0 C-1.95,-2.99 -3.25,-6.80 -3.25,-10.34 C-3.25,-12.65 -1.82,-13.60 0,-13.60 C1.82,-13.60 3.25,-12.65 3.25,-10.34 C3.25,-6.80 1.95,-2.99 0,0 Z" transform="translate(17.40,25.40) rotate(-92.2)"/><path d="M0,0 C-3.04,-4.80 -5.07,-10.90 -5.07,-16.57 C-5.07,-20.27 -2.84,-21.80 0,-21.80 C2.84,-21.80 5.07,-20.27 5.07,-16.57 C5.07,-10.90 3.04,-4.80 0,0 Z" transform="translate(21.30,22.00) rotate(13.5)"/><path d="M0,0 C-2.57,-4.09 -4.29,-9.30 -4.29,-14.14 C-4.29,-17.30 -2.40,-18.60 0,-18.60 C2.40,-18.60 4.29,-17.30 4.29,-14.14 C4.29,-9.30 2.57,-4.09 0,0 Z" transform="translate(23.00,22.40) rotate(41.0)"/><path d="M0,0 C-2.07,-3.43 -3.44,-7.80 -3.44,-11.86 C-3.44,-14.51 -1.93,-15.60 0,-15.60 C1.93,-15.60 3.44,-14.51 3.44,-11.86 C3.44,-7.80 2.07,-3.43 0,0 Z" transform="translate(25.00,23.50) rotate(67.5)"/><path d="M0,0 C-1.95,-2.99 -3.25,-6.80 -3.25,-10.34 C-3.25,-12.65 -1.82,-13.60 0,-13.60 C1.82,-13.60 3.25,-12.65 3.25,-10.34 C3.25,-6.80 1.95,-2.99 0,0 Z" transform="translate(22.60,25.40) rotate(92.2)"/></g></svg>
<span class="a blur" style="left:52.7px;width:20px"></span><span class="a nm" style="left:72.8px">组</span>
<span class="a c bl" style="left:143.5px">4</span>
<span class="a c" style="left:188.8px">32/32</span>
<span class="a c bl" style="left:249px">32</span>
<span class="a c bl" style="left:317px">38957</span>
<svg class="a" style="left:354.1px;top:4.8px;width:50px;height:10px" viewBox="0 0 50 10"><polygon points="4.80,1.95 5.93,3.95 8.18,4.40 6.62,6.09 6.89,8.37 4.80,7.42 2.71,8.37 2.98,6.09 1.42,4.40 3.67,3.95" fill="#f5aa3a" stroke="#f5aa3a" stroke-width="1.3" stroke-linejoin="round"/><polygon points="14.60,1.95 15.73,3.95 17.98,4.40 16.42,6.09 16.69,8.37 14.60,7.42 12.51,8.37 12.78,6.09 11.22,4.40 13.47,3.95" fill="#c8c8c8" stroke="#c8c8c8" stroke-width="1.3" stroke-linejoin="round"/><polygon points="24.40,1.95 25.53,3.95 27.78,4.40 26.22,6.09 26.49,8.37 24.40,7.42 22.31,8.37 22.58,6.09 21.02,4.40 23.27,3.95" fill="#c8c8c8" stroke="#c8c8c8" stroke-width="1.3" stroke-linejoin="round"/><polygon points="34.20,1.95 35.33,3.95 37.58,4.40 36.02,6.09 36.29,8.37 34.20,7.42 32.11,8.37 32.38,6.09 30.82,4.40 33.07,3.95" fill="#c8c8c8" stroke="#c8c8c8" stroke-width="1.3" stroke-linejoin="round"/><polygon points="44.00,1.95 45.13,3.95 47.38,4.40 45.82,6.09 46.09,8.37 44.00,7.42 41.91,8.37 42.18,6.09 40.62,4.40 42.87,3.95" fill="#c8c8c8" stroke="#c8c8c8" stroke-width="1.3" stroke-linejoin="round"/></svg>
<span class="a lk" style="left:425.5px">进入项目 解散小组</span>
</div>
<div class="a row" style="top:202.84px;height:20.36px">
<span class="a n" style="left:5px">10</span>
<svg class="a" style="left:39.4px;top:4.4px;width:11px;height:8.4px" viewBox="0 0 40 30.5"><g fill="#e8281f"><path d="M0,0 C-3.04,-4.80 -5.07,-10.90 -5.07,-16.57 C-5.07,-20.27 -2.84,-21.80 0,-21.80 C2.84,-21.80 5.07,-20.27 5.07,-16.57 C5.07,-10.90 3.04,-4.80 0,0 Z" transform="translate(18.70,22.00) rotate(-13.5)"/><path d="M0,0 C-2.57,-4.09 -4.29,-9.30 -4.29,-14.14 C-4.29,-17.30 -2.40,-18.60 0,-18.60 C2.40,-18.60 4.29,-17.30 4.29,-14.14 C4.29,-9.30 2.57,-4.09 0,0 Z" transform="translate(17.00,22.40) rotate(-41.0)"/><path d="M0,0 C-2.07,-3.43 -3.44,-7.80 -3.44,-11.86 C-3.44,-14.51 -1.93,-15.60 0,-15.60 C1.93,-15.60 3.44,-14.51 3.44,-11.86 C3.44,-7.80 2.07,-3.43 0,0 Z" transform="translate(15.00,23.50) rotate(-67.5)"/><path d="M0,0 C-1.95,-2.99 -3.25,-6.80 -3.25,-10.34 C-3.25,-12.65 -1.82,-13.60 0,-13.60 C1.82,-13.60 3.25,-12.65 3.25,-10.34 C3.25,-6.80 1.95,-2.99 0,0 Z" transform="translate(17.40,25.40) rotate(-92.2)"/><path d="M0,0 C-3.04,-4.80 -5.07,-10.90 -5.07,-16.57 C-5.07,-20.27 -2.84,-21.80 0,-21.80 C2.84,-21.80 5.07,-20.27 5.07,-16.57 C5.07,-10.90 3.04,-4.80 0,0 Z" transform="translate(21.30,22.00) rotate(13.5)"/><path d="M0,0 C-2.57,-4.09 -4.29,-9.30 -4.29,-14.14 C-4.29,-17.30 -2.40,-18.60 0,-18.60 C2.40,-18.60 4.29,-17.30 4.29,-14.14 C4.29,-9.30 2.57,-4.09 0,0 Z" transform="translate(23.00,22.40) rotate(41.0)"/><path d="M0,0 C-2.07,-3.43 -3.44,-7.80 -3.44,-11.86 C-3.44,-14.51 -1.93,-15.60 0,-15.60 C1.93,-15.60 3.44,-14.51 3.44,-11.86 C3.44,-7.80 2.07,-3.43 0,0 Z" transform="translate(25.00,23.50) rotate(67.5)"/><path d="M0,0 C-1.95,-2.99 -3.25,-6.80 -3.25,-10.34 C-3.25,-12.65 -1.82,-13.60 0,-13.60 C1.82,-13.60 3.25,-12.65 3.25,-10.34 C3.25,-6.80 1.95,-2.99 0,0 Z" transform="translate(22.60,25.40) rotate(92.2)"/></g></svg>
<span class="a blur" style="left:52.7px;width:20px"></span><span class="a nm" style="left:72.8px">组</span>
<span class="a c bl" style="left:143.5px">5</span>
<span class="a c" style="left:188.8px">30/30</span>
<span class="a c bl" style="left:249px">29</span>
<span class="a c bl" style="left:317px">1466</span>
<svg class="a" style="left:354.1px;top:4.8px;width:50px;height:10px" viewBox="0 0 50 10"><polygon points="4.80,1.95 5.93,3.95 8.18,4.40 6.62,6.09 6.89,8.37 4.80,7.42 2.71,8.37 2.98,6.09 1.42,4.40 3.67,3.95" fill="#f5aa3a" stroke="#f5aa3a" stroke-width="1.3" stroke-linejoin="round"/><polygon points="14.60,1.95 15.73,3.95 17.98,4.40 16.42,6.09 16.69,8.37 14.60,7.42 12.51,8.37 12.78,6.09 11.22,4.40 13.47,3.95" fill="#f5aa3a" stroke="#f5aa3a" stroke-width="1.3" stroke-linejoin="round"/><polygon points="24.40,1.95 25.53,3.95 27.78,4.40 26.22,6.09 26.49,8.37 24.40,7.42 22.31,8.37 22.58,6.09 21.02,4.40 23.27,3.95" fill="#f5aa3a" stroke="#f5aa3a" stroke-width="1.3" stroke-linejoin="round"/><polygon points="34.20,1.95 35.33,3.95 37.58,4.40 36.02,6.09 36.29,8.37 34.20,7.42 32.11,8.37 32.38,6.09 30.82,4.40 33.07,3.95" fill="#f5aa3a" stroke="#f5aa3a" stroke-width="1.3" stroke-linejoin="round"/><polygon points="44.00,1.95 45.13,3.95 47.38,4.40 45.82,6.09 46.09,8.37 44.00,7.42 41.91,8.37 42.18,6.09 40.62,4.40 42.87,3.95" fill="#f5aa3a" stroke="#f5aa3a" stroke-width="1.3" stroke-linejoin="round"/></svg>
<span class="a lk" style="left:425.5px">进入项目 解散小组</span>
</div>
<div class="a row" style="top:223.20px;height:20.36px">
<span class="a n" style="left:5px">11</span>
<svg class="a" style="left:39.4px;top:4.4px;width:11px;height:8.4px" viewBox="0 0 40 30.5"><g fill="#e8281f"><path d="M0,0 C-3.04,-4.80 -5.07,-10.90 -5.07,-16.57 C-5.07,-20.27 -2.84,-21.80 0,-21.80 C2.84,-21.80 5.07,-20.27 5.07,-16.57 C5.07,-10.90 3.04,-4.80 0,0 Z" transform="translate(18.70,22.00) rotate(-13.5)"/><path d="M0,0 C-2.57,-4.09 -4.29,-9.30 -4.29,-14.14 C-4.29,-17.30 -2.40,-18.60 0,-18.60 C2.40,-18.60 4.29,-17.30 4.29,-14.14 C4.29,-9.30 2.57,-4.09 0,0 Z" transform="translate(17.00,22.40) rotate(-41.0)"/><path d="M0,0 C-2.07,-3.43 -3.44,-7.80 -3.44,-11.86 C-3.44,-14.51 -1.93,-15.60 0,-15.60 C1.93,-15.60 3.44,-14.51 3.44,-11.86 C3.44,-7.80 2.07,-3.43 0,0 Z" transform="translate(15.00,23.50) rotate(-67.5)"/><path d="M0,0 C-1.95,-2.99 -3.25,-6.80 -3.25,-10.34 C-3.25,-12.65 -1.82,-13.60 0,-13.60 C1.82,-13.60 3.25,-12.65 3.25,-10.34 C3.25,-6.80 1.95,-2.99 0,0 Z" transform="translate(17.40,25.40) rotate(-92.2)"/><path d="M0,0 C-3.04,-4.80 -5.07,-10.90 -5.07,-16.57 C-5.07,-20.27 -2.84,-21.80 0,-21.80 C2.84,-21.80 5.07,-20.27 5.07,-16.57 C5.07,-10.90 3.04,-4.80 0,0 Z" transform="translate(21.30,22.00) rotate(13.5)"/><path d="M0,0 C-2.57,-4.09 -4.29,-9.30 -4.29,-14.14 C-4.29,-17.30 -2.40,-18.60 0,-18.60 C2.40,-18.60 4.29,-17.30 4.29,-14.14 C4.29,-9.30 2.57,-4.09 0,0 Z" transform="translate(23.00,22.40) rotate(41.0)"/><path d="M0,0 C-2.07,-3.43 -3.44,-7.80 -3.44,-11.86 C-3.44,-14.51 -1.93,-15.60 0,-15.60 C1.93,-15.60 3.44,-14.51 3.44,-11.86 C3.44,-7.80 2.07,-3.43 0,0 Z" transform="translate(25.00,23.50) rotate(67.5)"/><path d="M0,0 C-1.95,-2.99 -3.25,-6.80 -3.25,-10.34 C-3.25,-12.65 -1.82,-13.60 0,-13.60 C1.82,-13.60 3.25,-12.65 3.25,-10.34 C3.25,-6.80 1.95,-2.99 0,0 Z" transform="translate(22.60,25.40) rotate(92.2)"/></g></svg>
<span class="a blur" style="left:52.7px;width:20px"></span><span class="a nm" style="left:72.8px">组</span>
<span class="a c bl" style="left:143.5px">4</span>
<span class="a c" style="left:188.8px">19/47</span>
<span class="a c bl" style="left:249px">27</span>
<span class="a c bl" style="left:317px">1086</span>
<svg class="a" style="left:354.1px;top:4.8px;width:50px;height:10px" viewBox="0 0 50 10"><polygon points="4.80,1.95 5.93,3.95 8.18,4.40 6.62,6.09 6.89,8.37 4.80,7.42 2.71,8.37 2.98,6.09 1.42,4.40 3.67,3.95" fill="#f5aa3a" stroke="#f5aa3a" stroke-width="1.3" stroke-linejoin="round"/><polygon points="14.60,1.95 15.73,3.95 17.98,4.40 16.42,6.09 16.69,8.37 14.60,7.42 12.51,8.37 12.78,6.09 11.22,4.40 13.47,3.95" fill="#c8c8c8" stroke="#c8c8c8" stroke-width="1.3" stroke-linejoin="round"/><polygon points="24.40,1.95 25.53,3.95 27.78,4.40 26.22,6.09 26.49,8.37 24.40,7.42 22.31,8.37 22.58,6.09 21.02,4.40 23.27,3.95" fill="#c8c8c8" stroke="#c8c8c8" stroke-width="1.3" stroke-linejoin="round"/><polygon points="34.20,1.95 35.33,3.95 37.58,4.40 36.02,6.09 36.29,8.37 34.20,7.42 32.11,8.37 32.38,6.09 30.82,4.40 33.07,3.95" fill="#c8c8c8" stroke="#c8c8c8" stroke-width="1.3" stroke-linejoin="round"/><polygon points="44.00,1.95 45.13,3.95 47.38,4.40 45.82,6.09 46.09,8.37 44.00,7.42 41.91,8.37 42.18,6.09 40.62,4.40 42.87,3.95" fill="#c8c8c8" stroke="#c8c8c8" stroke-width="1.3" stroke-linejoin="round"/></svg>
<span class="a lk" style="left:425.5px">进入项目 解散小组</span>
</div>
<div class="a row" style="top:243.56px;height:20.36px">
<span class="a n" style="left:5px">12</span>
<svg class="a" style="left:39.4px;top:4.4px;width:11px;height:8.4px" viewBox="0 0 40 30.5"><g fill="#e8281f"><path d="M0,0 C-3.04,-4.80 -5.07,-10.90 -5.07,-16.57 C-5.07,-20.27 -2.84,-21.80 0,-21.80 C2.84,-21.80 5.07,-20.27 5.07,-16.57 C5.07,-10.90 3.04,-4.80 0,0 Z" transform="translate(18.70,22.00) rotate(-13.5)"/><path d="M0,0 C-2.57,-4.09 -4.29,-9.30 -4.29,-14.14 C-4.29,-17.30 -2.40,-18.60 0,-18.60 C2.40,-18.60 4.29,-17.30 4.29,-14.14 C4.29,-9.30 2.57,-4.09 0,0 Z" transform="translate(17.00,22.40) rotate(-41.0)"/><path d="M0,0 C-2.07,-3.43 -3.44,-7.80 -3.44,-11.86 C-3.44,-14.51 -1.93,-15.60 0,-15.60 C1.93,-15.60 3.44,-14.51 3.44,-11.86 C3.44,-7.80 2.07,-3.43 0,0 Z" transform="translate(15.00,23.50) rotate(-67.5)"/><path d="M0,0 C-1.95,-2.99 -3.25,-6.80 -3.25,-10.34 C-3.25,-12.65 -1.82,-13.60 0,-13.60 C1.82,-13.60 3.25,-12.65 3.25,-10.34 C3.25,-6.80 1.95,-2.99 0,0 Z" transform="translate(17.40,25.40) rotate(-92.2)"/><path d="M0,0 C-3.04,-4.80 -5.07,-10.90 -5.07,-16.57 C-5.07,-20.27 -2.84,-21.80 0,-21.80 C2.84,-21.80 5.07,-20.27 5.07,-16.57 C5.07,-10.90 3.04,-4.80 0,0 Z" transform="translate(21.30,22.00) rotate(13.5)"/><path d="M0,0 C-2.57,-4.09 -4.29,-9.30 -4.29,-14.14 C-4.29,-17.30 -2.40,-18.60 0,-18.60 C2.40,-18.60 4.29,-17.30 4.29,-14.14 C4.29,-9.30 2.57,-4.09 0,0 Z" transform="translate(23.00,22.40) rotate(41.0)"/><path d="M0,0 C-2.07,-3.43 -3.44,-7.80 -3.44,-11.86 C-3.44,-14.51 -1.93,-15.60 0,-15.60 C1.93,-15.60 3.44,-14.51 3.44,-11.86 C3.44,-7.80 2.07,-3.43 0,0 Z" transform="translate(25.00,23.50) rotate(67.5)"/><path d="M0,0 C-1.95,-2.99 -3.25,-6.80 -3.25,-10.34 C-3.25,-12.65 -1.82,-13.60 0,-13.60 C1.82,-13.60 3.25,-12.65 3.25,-10.34 C3.25,-6.80 1.95,-2.99 0,0 Z" transform="translate(22.60,25.40) rotate(92.2)"/></g></svg>
<span class="a blur" style="left:52.7px;width:20px"></span><span class="a nm" style="left:72.8px">组</span>
<span class="a c bl" style="left:143.5px">4</span>
<span class="a c" style="left:188.8px">8/23</span>
<span class="a c bl" style="left:249px">27</span>
<span class="a c bl" style="left:317px">775</span>
<svg class="a" style="left:354.1px;top:4.8px;width:50px;height:10px" viewBox="0 0 50 10"><polygon points="4.80,1.95 5.93,3.95 8.18,4.40 6.62,6.09 6.89,8.37 4.80,7.42 2.71,8.37 2.98,6.09 1.42,4.40 3.67,3.95" fill="#f5aa3a" stroke="#f5aa3a" stroke-width="1.3" stroke-linejoin="round"/><polygon points="14.60,1.95 15.73,3.95 17.98,4.40 16.42,6.09 16.69,8.37 14.60,7.42 12.51,8.37 12.78,6.09 11.22,4.40 13.47,3.95" fill="#f5aa3a" stroke="#f5aa3a" stroke-width="1.3" stroke-linejoin="round"/><polygon points="24.40,1.95 25.53,3.95 27.78,4.40 26.22,6.09 26.49,8.37 24.40,7.42 22.31,8.37 22.58,6.09 21.02,4.40 23.27,3.95" fill="#f5aa3a" stroke="#f5aa3a" stroke-width="1.3" stroke-linejoin="round"/><polygon points="34.20,1.95 35.33,3.95 37.58,4.40 36.02,6.09 36.29,8.37 34.20,7.42 32.11,8.37 32.38,6.09 30.82,4.40 33.07,3.95" fill="#f5aa3a" stroke="#f5aa3a" stroke-width="1.3" stroke-linejoin="round"/><polygon points="44.00,1.95 45.13,3.95 47.38,4.40 45.82,6.09 46.09,8.37 44.00,7.42 41.91,8.37 42.18,6.09 40.62,4.40 42.87,3.95" fill="#c8c8c8" stroke="#c8c8c8" stroke-width="1.3" stroke-linejoin="round"/></svg>
<span class="a lk" style="left:425.5px">进入项目 解散小组</span>
</div>
<div class="a row" style="top:263.92px;height:20.36px">
<span class="a n" style="left:5px">13</span>
<svg class="a" style="left:39.4px;top:4.4px;width:11px;height:8.4px" viewBox="0 0 40 30.5"><g fill="#e8281f"><path d="M0,0 C-3.04,-4.80 -5.07,-10.90 -5.07,-16.57 C-5.07,-20.27 -2.84,-21.80 0,-21.80 C2.84,-21.80 5.07,-20.27 5.07,-16.57 C5.07,-10.90 3.04,-4.80 0,0 Z" transform="translate(18.70,22.00) rotate(-13.5)"/><path d="M0,0 C-2.57,-4.09 -4.29,-9.30 -4.29,-14.14 C-4.29,-17.30 -2.40,-18.60 0,-18.60 C2.40,-18.60 4.29,-17.30 4.29,-14.14 C4.29,-9.30 2.57,-4.09 0,0 Z" transform="translate(17.00,22.40) rotate(-41.0)"/><path d="M0,0 C-2.07,-3.43 -3.44,-7.80 -3.44,-11.86 C-3.44,-14.51 -1.93,-15.60 0,-15.60 C1.93,-15.60 3.44,-14.51 3.44,-11.86 C3.44,-7.80 2.07,-3.43 0,0 Z" transform="translate(15.00,23.50) rotate(-67.5)"/><path d="M0,0 C-1.95,-2.99 -3.25,-6.80 -3.25,-10.34 C-3.25,-12.65 -1.82,-13.60 0,-13.60 C1.82,-13.60 3.25,-12.65 3.25,-10.34 C3.25,-6.80 1.95,-2.99 0,0 Z" transform="translate(17.40,25.40) rotate(-92.2)"/><path d="M0,0 C-3.04,-4.80 -5.07,-10.90 -5.07,-16.57 C-5.07,-20.27 -2.84,-21.80 0,-21.80 C2.84,-21.80 5.07,-20.27 5.07,-16.57 C5.07,-10.90 3.04,-4.80 0,0 Z" transform="translate(21.30,22.00) rotate(13.5)"/><path d="M0,0 C-2.57,-4.09 -4.29,-9.30 -4.29,-14.14 C-4.29,-17.30 -2.40,-18.60 0,-18.60 C2.40,-18.60 4.29,-17.30 4.29,-14.14 C4.29,-9.30 2.57,-4.09 0,0 Z" transform="translate(23.00,22.40) rotate(41.0)"/><path d="M0,0 C-2.07,-3.43 -3.44,-7.80 -3.44,-11.86 C-3.44,-14.51 -1.93,-15.60 0,-15.60 C1.93,-15.60 3.44,-14.51 3.44,-11.86 C3.44,-7.80 2.07,-3.43 0,0 Z" transform="translate(25.00,23.50) rotate(67.5)"/><path d="M0,0 C-1.95,-2.99 -3.25,-6.80 -3.25,-10.34 C-3.25,-12.65 -1.82,-13.60 0,-13.60 C1.82,-13.60 3.25,-12.65 3.25,-10.34 C3.25,-6.80 1.95,-2.99 0,0 Z" transform="translate(22.60,25.40) rotate(92.2)"/></g></svg>
<span class="a blur" style="left:52.7px;width:20px"></span><span class="a nm" style="left:72.8px">组</span>
<span class="a c bl" style="left:143.5px">4</span>
<span class="a c" style="left:188.8px">6/25</span>
<span class="a c bl" style="left:249px">26</span>
<span class="a c bl" style="left:317px">15786</span>
<svg class="a" style="left:354.1px;top:4.8px;width:50px;height:10px" viewBox="0 0 50 10"><polygon points="4.80,1.95 5.93,3.95 8.18,4.40 6.62,6.09 6.89,8.37 4.80,7.42 2.71,8.37 2.98,6.09 1.42,4.40 3.67,3.95" fill="#f5aa3a" stroke="#f5aa3a" stroke-width="1.3" stroke-linejoin="round"/><polygon points="14.60,1.95 15.73,3.95 17.98,4.40 16.42,6.09 16.69,8.37 14.60,7.42 12.51,8.37 12.78,6.09 11.22,4.40 13.47,3.95" fill="#c8c8c8" stroke="#c8c8c8" stroke-width="1.3" stroke-linejoin="round"/><polygon points="24.40,1.95 25.53,3.95 27.78,4.40 26.22,6.09 26.49,8.37 24.40,7.42 22.31,8.37 22.58,6.09 21.02,4.40 23.27,3.95" fill="#c8c8c8" stroke="#c8c8c8" stroke-width="1.3" stroke-linejoin="round"/><polygon points="34.20,1.95 35.33,3.95 37.58,4.40 36.02,6.09 36.29,8.37 34.20,7.42 32.11,8.37 32.38,6.09 30.82,4.40 33.07,3.95" fill="#c8c8c8" stroke="#c8c8c8" stroke-width="1.3" stroke-linejoin="round"/><polygon points="44.00,1.95 45.13,3.95 47.38,4.40 45.82,6.09 46.09,8.37 44.00,7.42 41.91,8.37 42.18,6.09 40.62,4.40 42.87,3.95" fill="#c8c8c8" stroke="#c8c8c8" stroke-width="1.3" stroke-linejoin="round"/></svg>
<span class="a lk" style="left:425.5px">进入项目 解散小组</span>
</div>
<div class="a row" style="top:284.28px;height:20.36px">
<span class="a n" style="left:5px">14</span>
<svg class="a" style="left:39.4px;top:4.4px;width:11px;height:8.4px" viewBox="0 0 40 30.5"><g fill="#e8281f"><path d="M0,0 C-3.04,-4.80 -5.07,-10.90 -5.07,-16.57 C-5.07,-20.27 -2.84,-21.80 0,-21.80 C2.84,-21.80 5.07,-20.27 5.07,-16.57 C5.07,-10.90 3.04,-4.80 0,0 Z" transform="translate(18.70,22.00) rotate(-13.5)"/><path d="M0,0 C-2.57,-4.09 -4.29,-9.30 -4.29,-14.14 C-4.29,-17.30 -2.40,-18.60 0,-18.60 C2.40,-18.60 4.29,-17.30 4.29,-14.14 C4.29,-9.30 2.57,-4.09 0,0 Z" transform="translate(17.00,22.40) rotate(-41.0)"/><path d="M0,0 C-2.07,-3.43 -3.44,-7.80 -3.44,-11.86 C-3.44,-14.51 -1.93,-15.60 0,-15.60 C1.93,-15.60 3.44,-14.51 3.44,-11.86 C3.44,-7.80 2.07,-3.43 0,0 Z" transform="translate(15.00,23.50) rotate(-67.5)"/><path d="M0,0 C-1.95,-2.99 -3.25,-6.80 -3.25,-10.34 C-3.25,-12.65 -1.82,-13.60 0,-13.60 C1.82,-13.60 3.25,-12.65 3.25,-10.34 C3.25,-6.80 1.95,-2.99 0,0 Z" transform="translate(17.40,25.40) rotate(-92.2)"/><path d="M0,0 C-3.04,-4.80 -5.07,-10.90 -5.07,-16.57 C-5.07,-20.27 -2.84,-21.80 0,-21.80 C2.84,-21.80 5.07,-20.27 5.07,-16.57 C5.07,-10.90 3.04,-4.80 0,0 Z" transform="translate(21.30,22.00) rotate(13.5)"/><path d="M0,0 C-2.57,-4.09 -4.29,-9.30 -4.29,-14.14 C-4.29,-17.30 -2.40,-18.60 0,-18.60 C2.40,-18.60 4.29,-17.30 4.29,-14.14 C4.29,-9.30 2.57,-4.09 0,0 Z" transform="translate(23.00,22.40) rotate(41.0)"/><path d="M0,0 C-2.07,-3.43 -3.44,-7.80 -3.44,-11.86 C-3.44,-14.51 -1.93,-15.60 0,-15.60 C1.93,-15.60 3.44,-14.51 3.44,-11.86 C3.44,-7.80 2.07,-3.43 0,0 Z" transform="translate(25.00,23.50) rotate(67.5)"/><path d="M0,0 C-1.95,-2.99 -3.25,-6.80 -3.25,-10.34 C-3.25,-12.65 -1.82,-13.60 0,-13.60 C1.82,-13.60 3.25,-12.65 3.25,-10.34 C3.25,-6.80 1.95,-2.99 0,0 Z" transform="translate(22.60,25.40) rotate(92.2)"/></g></svg>
<span class="a blur" style="left:52.7px;width:20px"></span><span class="a nm" style="left:72.8px">组</span>
<span class="a c bl" style="left:143.5px">4</span>
<span class="a c" style="left:188.8px">10/17</span>
<span class="a c bl" style="left:249px">26</span>
<span class="a c bl" style="left:317px">1769</span>
<svg class="a" style="left:354.1px;top:4.8px;width:50px;height:10px" viewBox="0 0 50 10"><polygon points="4.80,1.95 5.93,3.95 8.18,4.40 6.62,6.09 6.89,8.37 4.80,7.42 2.71,8.37 2.98,6.09 1.42,4.40 3.67,3.95" fill="#f5aa3a" stroke="#f5aa3a" stroke-width="1.3" stroke-linejoin="round"/><polygon points="14.60,1.95 15.73,3.95 17.98,4.40 16.42,6.09 16.69,8.37 14.60,7.42 12.51,8.37 12.78,6.09 11.22,4.40 13.47,3.95" fill="#f5aa3a" stroke="#f5aa3a" stroke-width="1.3" stroke-linejoin="round"/><polygon points="24.40,1.95 25.53,3.95 27.78,4.40 26.22,6.09 26.49,8.37 24.40,7.42 22.31,8.37 22.58,6.09 21.02,4.40 23.27,3.95" fill="#f5aa3a" stroke="#f5aa3a" stroke-width="1.3" stroke-linejoin="round"/><polygon points="34.20,1.95 35.33,3.95 37.58,4.40 36.02,6.09 36.29,8.37 34.20,7.42 32.11,8.37 32.38,6.09 30.82,4.40 33.07,3.95" fill="#f5aa3a" stroke="#f5aa3a" stroke-width="1.3" stroke-linejoin="round"/><polygon points="44.00,1.95 45.13,3.95 47.38,4.40 45.82,6.09 46.09,8.37 44.00,7.42 41.91,8.37 42.18,6.09 40.62,4.40 42.87,3.95" fill="#c8c8c8" stroke="#c8c8c8" stroke-width="1.3" stroke-linejoin="round"/></svg>
<span class="a lk" style="left:425.5px">进入项目 解散小组</span>
</div>
<div class="a row" style="top:304.64px;height:20.36px">
<span class="a n" style="left:5px">15</span>
<svg class="a" style="left:39.4px;top:4.4px;width:11px;height:8.4px" viewBox="0 0 40 30.5"><g fill="#e8281f"><path d="M0,0 C-3.04,-4.80 -5.07,-10.90 -5.07,-16.57 C-5.07,-20.27 -2.84,-21.80 0,-21.80 C2.84,-21.80 5.07,-20.27 5.07,-16.57 C5.07,-10.90 3.04,-4.80 0,0 Z" transform="translate(18.70,22.00) rotate(-13.5)"/><path d="M0,0 C-2.57,-4.09 -4.29,-9.30 -4.29,-14.14 C-4.29,-17.30 -2.40,-18.60 0,-18.60 C2.40,-18.60 4.29,-17.30 4.29,-14.14 C4.29,-9.30 2.57,-4.09 0,0 Z" transform="translate(17.00,22.40) rotate(-41.0)"/><path d="M0,0 C-2.07,-3.43 -3.44,-7.80 -3.44,-11.86 C-3.44,-14.51 -1.93,-15.60 0,-15.60 C1.93,-15.60 3.44,-14.51 3.44,-11.86 C3.44,-7.80 2.07,-3.43 0,0 Z" transform="translate(15.00,23.50) rotate(-67.5)"/><path d="M0,0 C-1.95,-2.99 -3.25,-6.80 -3.25,-10.34 C-3.25,-12.65 -1.82,-13.60 0,-13.60 C1.82,-13.60 3.25,-12.65 3.25,-10.34 C3.25,-6.80 1.95,-2.99 0,0 Z" transform="translate(17.40,25.40) rotate(-92.2)"/><path d="M0,0 C-3.04,-4.80 -5.07,-10.90 -5.07,-16.57 C-5.07,-20.27 -2.84,-21.80 0,-21.80 C2.84,-21.80 5.07,-20.27 5.07,-16.57 C5.07,-10.90 3.04,-4.80 0,0 Z" transform="translate(21.30,22.00) rotate(13.5)"/><path d="M0,0 C-2.57,-4.09 -4.29,-9.30 -4.29,-14.14 C-4.29,-17.30 -2.40,-18.60 0,-18.60 C2.40,-18.60 4.29,-17.30 4.29,-14.14 C4.29,-9.30 2.57,-4.09 0,0 Z" transform="translate(23.00,22.40) rotate(41.0)"/><path d="M0,0 C-2.07,-3.43 -3.44,-7.80 -3.44,-11.86 C-3.44,-14.51 -1.93,-15.60 0,-15.60 C1.93,-15.60 3.44,-14.51 3.44,-11.86 C3.44,-7.80 2.07,-3.43 0,0 Z" transform="translate(25.00,23.50) rotate(67.5)"/><path d="M0,0 C-1.95,-2.99 -3.25,-6.80 -3.25,-10.34 C-3.25,-12.65 -1.82,-13.60 0,-13.60 C1.82,-13.60 3.25,-12.65 3.25,-10.34 C3.25,-6.80 1.95,-2.99 0,0 Z" transform="translate(22.60,25.40) rotate(92.2)"/></g></svg>
<span class="a blur" style="left:52.7px;width:20px"></span><span class="a nm" style="left:72.8px">组</span>
<span class="a c bl" style="left:143.5px">4</span>
<span class="a c" style="left:188.8px">27/27</span>
<span class="a c bl" style="left:249px">24</span>
<span class="a c bl" style="left:317px">4735</span>
<svg class="a" style="left:354.1px;top:4.8px;width:50px;height:10px" viewBox="0 0 50 10"><polygon points="4.80,1.95 5.93,3.95 8.18,4.40 6.62,6.09 6.89,8.37 4.80,7.42 2.71,8.37 2.98,6.09 1.42,4.40 3.67,3.95" fill="#f5aa3a" stroke="#f5aa3a" stroke-width="1.3" stroke-linejoin="round"/><polygon points="14.60,1.95 15.73,3.95 17.98,4.40 16.42,6.09 16.69,8.37 14.60,7.42 12.51,8.37 12.78,6.09 11.22,4.40 13.47,3.95" fill="#f5aa3a" stroke="#f5aa3a" stroke-width="1.3" stroke-linejoin="round"/><polygon points="24.40,1.95 25.53,3.95 27.78,4.40 26.22,6.09 26.49,8.37 24.40,7.42 22.31,8.37 22.58,6.09 21.02,4.40 23.27,3.95" fill="#f5aa3a" stroke="#f5aa3a" stroke-width="1.3" stroke-linejoin="round"/><polygon points="34.20,1.95 35.33,3.95 37.58,4.40 36.02,6.09 36.29,8.37 34.20,7.42 32.11,8.37 32.38,6.09 30.82,4.40 33.07,3.95" fill="#f5aa3a" stroke="#f5aa3a" stroke-width="1.3" stroke-linejoin="round"/><polygon points="44.00,1.95 45.13,3.95 47.38,4.40 45.82,6.09 46.09,8.37 44.00,7.42 41.91,8.37 42.18,6.09 40.62,4.40 42.87,3.95" fill="#f5aa3a" stroke="#f5aa3a" stroke-width="1.3" stroke-linejoin="round"/></svg>
<span class="a lk" style="left:425.5px">进入项目 解散小组</span>
</div>
<div class="a row" style="top:325.00px;height:20.36px">
<span class="a n" style="left:5px">16</span>
<svg class="a" style="left:39.4px;top:4.4px;width:11px;height:8.4px" viewBox="0 0 40 30.5"><g fill="#e8281f"><path d="M0,0 C-3.04,-4.80 -5.07,-10.90 -5.07,-16.57 C-5.07,-20.27 -2.84,-21.80 0,-21.80 C2.84,-21.80 5.07,-20.27 5.07,-16.57 C5.07,-10.90 3.04,-4.80 0,0 Z" transform="translate(18.70,22.00) rotate(-13.5)"/><path d="M0,0 C-2.57,-4.09 -4.29,-9.30 -4.29,-14.14 C-4.29,-17.30 -2.40,-18.60 0,-18.60 C2.40,-18.60 4.29,-17.30 4.29,-14.14 C4.29,-9.30 2.57,-4.09 0,0 Z" transform="translate(17.00,22.40) rotate(-41.0)"/><path d="M0,0 C-2.07,-3.43 -3.44,-7.80 -3.44,-11.86 C-3.44,-14.51 -1.93,-15.60 0,-15.60 C1.93,-15.60 3.44,-14.51 3.44,-11.86 C3.44,-7.80 2.07,-3.43 0,0 Z" transform="translate(15.00,23.50) rotate(-67.5)"/><path d="M0,0 C-1.95,-2.99 -3.25,-6.80 -3.25,-10.34 C-3.25,-12.65 -1.82,-13.60 0,-13.60 C1.82,-13.60 3.25,-12.65 3.25,-10.34 C3.25,-6.80 1.95,-2.99 0,0 Z" transform="translate(17.40,25.40) rotate(-92.2)"/><path d="M0,0 C-3.04,-4.80 -5.07,-10.90 -5.07,-16.57 C-5.07,-20.27 -2.84,-21.80 0,-21.80 C2.84,-21.80 5.07,-20.27 5.07,-16.57 C5.07,-10.90 3.04,-4.80 0,0 Z" transform="translate(21.30,22.00) rotate(13.5)"/><path d="M0,0 C-2.57,-4.09 -4.29,-9.30 -4.29,-14.14 C-4.29,-17.30 -2.40,-18.60 0,-18.60 C2.40,-18.60 4.29,-17.30 4.29,-14.14 C4.29,-9.30 2.57,-4.09 0,0 Z" transform="translate(23.00,22.40) rotate(41.0)"/><path d="M0,0 C-2.07,-3.43 -3.44,-7.80 -3.44,-11.86 C-3.44,-14.51 -1.93,-15.60 0,-15.60 C1.93,-15.60 3.44,-14.51 3.44,-11.86 C3.44,-7.80 2.07,-3.43 0,0 Z" transform="translate(25.00,23.50) rotate(67.5)"/><path d="M0,0 C-1.95,-2.99 -3.25,-6.80 -3.25,-10.34 C-3.25,-12.65 -1.82,-13.60 0,-13.60 C1.82,-13.60 3.25,-12.65 3.25,-10.34 C3.25,-6.80 1.95,-2.99 0,0 Z" transform="translate(22.60,25.40) rotate(92.2)"/></g></svg>
<span class="a blur" style="left:52.7px;width:20px"></span><span class="a nm" style="left:72.8px">组</span>
<span class="a c bl" style="left:143.5px">4</span>
<span class="a c" style="left:188.8px">18/18</span>
<span class="a c bl" style="left:249px">23</span>
<span class="a c bl" style="left:317px">15253</span>
<svg class="a" style="left:354.1px;top:4.8px;width:50px;height:10px" viewBox="0 0 50 10"><polygon points="4.80,1.95 5.93,3.95 8.18,4.40 6.62,6.09 6.89,8.37 4.80,7.42 2.71,8.37 2.98,6.09 1.42,4.40 3.67,3.95" fill="#f5aa3a" stroke="#f5aa3a" stroke-width="1.3" stroke-linejoin="round"/><polygon points="14.60,1.95 15.73,3.95 17.98,4.40 16.42,6.09 16.69,8.37 14.60,7.42 12.51,8.37 12.78,6.09 11.22,4.40 13.47,3.95" fill="#c8c8c8" stroke="#c8c8c8" stroke-width="1.3" stroke-linejoin="round"/><polygon points="24.40,1.95 25.53,3.95 27.78,4.40 26.22,6.09 26.49,8.37 24.40,7.42 22.31,8.37 22.58,6.09 21.02,4.40 23.27,3.95" fill="#c8c8c8" stroke="#c8c8c8" stroke-width="1.3" stroke-linejoin="round"/><polygon points="34.20,1.95 35.33,3.95 37.58,4.40 36.02,6.09 36.29,8.37 34.20,7.42 32.11,8.37 32.38,6.09 30.82,4.40 33.07,3.95" fill="#c8c8c8" stroke="#c8c8c8" stroke-width="1.3" stroke-linejoin="round"/><polygon points="44.00,1.95 45.13,3.95 47.38,4.40 45.82,6.09 46.09,8.37 44.00,7.42 41.91,8.37 42.18,6.09 40.62,4.40 42.87,3.95" fill="#c8c8c8" stroke="#c8c8c8" stroke-width="1.3" stroke-linejoin="round"/></svg>
<span class="a lk" style="left:425.5px">进入项目 解散小组</span>
</div>
<div class="a row" style="top:345.36px;height:20.36px">
<span class="a n" style="left:5px">17</span>
<svg class="a" style="left:39.4px;top:4.4px;width:11px;height:8.4px" viewBox="0 0 40 30.5"><g fill="#e8281f"><path d="M0,0 C-3.04,-4.80 -5.07,-10.90 -5.07,-16.57 C-5.07,-20.27 -2.84,-21.80 0,-21.80 C2.84,-21.80 5.07,-20.27 5.07,-16.57 C5.07,-10.90 3.04,-4.80 0,0 Z" transform="translate(18.70,22.00) rotate(-13.5)"/><path d="M0,0 C-2.57,-4.09 -4.29,-9.30 -4.29,-14.14 C-4.29,-17.30 -2.40,-18.60 0,-18.60 C2.40,-18.60 4.29,-17.30 4.29,-14.14 C4.29,-9.30 2.57,-4.09 0,0 Z" transform="translate(17.00,22.40) rotate(-41.0)"/><path d="M0,0 C-2.07,-3.43 -3.44,-7.80 -3.44,-11.86 C-3.44,-14.51 -1.93,-15.60 0,-15.60 C1.93,-15.60 3.44,-14.51 3.44,-11.86 C3.44,-7.80 2.07,-3.43 0,0 Z" transform="translate(15.00,23.50) rotate(-67.5)"/><path d="M0,0 C-1.95,-2.99 -3.25,-6.80 -3.25,-10.34 C-3.25,-12.65 -1.82,-13.60 0,-13.60 C1.82,-13.60 3.25,-12.65 3.25,-10.34 C3.25,-6.80 1.95,-2.99 0,0 Z" transform="translate(17.40,25.40) rotate(-92.2)"/><path d="M0,0 C-3.04,-4.80 -5.07,-10.90 -5.07,-16.57 C-5.07,-20.27 -2.84,-21.80 0,-21.80 C2.84,-21.80 5.07,-20.27 5.07,-16.57 C5.07,-10.90 3.04,-4.80 0,0 Z" transform="translate(21.30,22.00) rotate(13.5)"/><path d="M0,0 C-2.57,-4.09 -4.29,-9.30 -4.29,-14.14 C-4.29,-17.30 -2.40,-18.60 0,-18.60 C2.40,-18.60 4.29,-17.30 4.29,-14.14 C4.29,-9.30 2.57,-4.09 0,0 Z" transform="translate(23.00,22.40) rotate(41.0)"/><path d="M0,0 C-2.07,-3.43 -3.44,-7.80 -3.44,-11.86 C-3.44,-14.51 -1.93,-15.60 0,-15.60 C1.93,-15.60 3.44,-14.51 3.44,-11.86 C3.44,-7.80 2.07,-3.43 0,0 Z" transform="translate(25.00,23.50) rotate(67.5)"/><path d="M0,0 C-1.95,-2.99 -3.25,-6.80 -3.25,-10.34 C-3.25,-12.65 -1.82,-13.60 0,-13.60 C1.82,-13.60 3.25,-12.65 3.25,-10.34 C3.25,-6.80 1.95,-2.99 0,0 Z" transform="translate(22.60,25.40) rotate(92.2)"/></g></svg>
<span class="a blur" style="left:52.7px;width:20px"></span><span class="a nm" style="left:72.8px">组</span>
<span class="a c bl" style="left:143.5px">5</span>
<span class="a c" style="left:188.8px">49/49</span>
<span class="a c bl" style="left:249px">21</span>
<span class="a c bl" style="left:317px">7411</span>
<svg class="a" style="left:354.1px;top:4.8px;width:50px;height:10px" viewBox="0 0 50 10"><polygon points="4.80,1.95 5.93,3.95 8.18,4.40 6.62,6.09 6.89,8.37 4.80,7.42 2.71,8.37 2.98,6.09 1.42,4.40 3.67,3.95" fill="#f5aa3a" stroke="#f5aa3a" stroke-width="1.3" stroke-linejoin="round"/><polygon points="14.60,1.95 15.73,3.95 17.98,4.40 16.42,6.09 16.69,8.37 14.60,7.42 12.51,8.37 12.78,6.09 11.22,4.40 13.47,3.95" fill="#f5aa3a" stroke="#f5aa3a" stroke-width="1.3" stroke-linejoin="round"/><polygon points="24.40,1.95 25.53,3.95 27.78,4.40 26.22,6.09 26.49,8.37 24.40,7.42 22.31,8.37 22.58,6.09 21.02,4.40 23.27,3.95" fill="#f5aa3a" stroke="#f5aa3a" stroke-width="1.3" stroke-linejoin="round"/><polygon points="34.20,1.95 35.33,3.95 37.58,4.40 36.02,6.09 36.29,8.37 34.20,7.42 32.11,8.37 32.38,6.09 30.82,4.40 33.07,3.95" fill="#f5aa3a" stroke="#f5aa3a" stroke-width="1.3" stroke-linejoin="round"/><polygon points="44.00,1.95 45.13,3.95 47.38,4.40 45.82,6.09 46.09,8.37 44.00,7.42 41.91,8.37 42.18,6.09 40.62,4.40 42.87,3.95" fill="#f5aa3a" stroke="#f5aa3a" stroke-width="1.3" stroke-linejoin="round"/></svg>
<span class="a lk" style="left:425.5px">进入项目 解散小组</span>
</div>
<div class="a row" style="top:365.72px;height:20.36px">
<span class="a n" style="left:5px">18</span>
<svg class="a" style="left:39.4px;top:4.4px;width:11px;height:8.4px" viewBox="0 0 40 30.5"><g fill="#e8281f"><path d="M0,0 C-3.04,-4.80 -5.07,-10.90 -5.07,-16.57 C-5.07,-20.27 -2.84,-21.80 0,-21.80 C2.84,-21.80 5.07,-20.27 5.07,-16.57 C5.07,-10.90 3.04,-4.80 0,0 Z" transform="translate(18.70,22.00) rotate(-13.5)"/><path d="M0,0 C-2.57,-4.09 -4.29,-9.30 -4.29,-14.14 C-4.29,-17.30 -2.40,-18.60 0,-18.60 C2.40,-18.60 4.29,-17.30 4.29,-14.14 C4.29,-9.30 2.57,-4.09 0,0 Z" transform="translate(17.00,22.40) rotate(-41.0)"/><path d="M0,0 C-2.07,-3.43 -3.44,-7.80 -3.44,-11.86 C-3.44,-14.51 -1.93,-15.60 0,-15.60 C1.93,-15.60 3.44,-14.51 3.44,-11.86 C3.44,-7.80 2.07,-3.43 0,0 Z" transform="translate(15.00,23.50) rotate(-67.5)"/><path d="M0,0 C-1.95,-2.99 -3.25,-6.80 -3.25,-10.34 C-3.25,-12.65 -1.82,-13.60 0,-13.60 C1.82,-13.60 3.25,-12.65 3.25,-10.34 C3.25,-6.80 1.95,-2.99 0,0 Z" transform="translate(17.40,25.40) rotate(-92.2)"/><path d="M0,0 C-3.04,-4.80 -5.07,-10.90 -5.07,-16.57 C-5.07,-20.27 -2.84,-21.80 0,-21.80 C2.84,-21.80 5.07,-20.27 5.07,-16.57 C5.07,-10.90 3.04,-4.80 0,0 Z" transform="translate(21.30,22.00) rotate(13.5)"/><path d="M0,0 C-2.57,-4.09 -4.29,-9.30 -4.29,-14.14 C-4.29,-17.30 -2.40,-18.60 0,-18.60 C2.40,-18.60 4.29,-17.30 4.29,-14.14 C4.29,-9.30 2.57,-4.09 0,0 Z" transform="translate(23.00,22.40) rotate(41.0)"/><path d="M0,0 C-2.07,-3.43 -3.44,-7.80 -3.44,-11.86 C-3.44,-14.51 -1.93,-15.60 0,-15.60 C1.93,-15.60 3.44,-14.51 3.44,-11.86 C3.44,-7.80 2.07,-3.43 0,0 Z" transform="translate(25.00,23.50) rotate(67.5)"/><path d="M0,0 C-1.95,-2.99 -3.25,-6.80 -3.25,-10.34 C-3.25,-12.65 -1.82,-13.60 0,-13.60 C1.82,-13.60 3.25,-12.65 3.25,-10.34 C3.25,-6.80 1.95,-2.99 0,0 Z" transform="translate(22.60,25.40) rotate(92.2)"/></g></svg>
<span class="a blur" style="left:52.7px;width:20px"></span><span class="a nm" style="left:72.8px">组</span>
<span class="a c bl" style="left:143.5px">5</span>
<span class="a c" style="left:188.8px">7/8</span>
<span class="a c bl" style="left:249px">17</span>
<span class="a c bl" style="left:317px">1974</span>
<svg class="a" style="left:354.1px;top:4.8px;width:50px;height:10px" viewBox="0 0 50 10"><polygon points="4.80,1.95 5.93,3.95 8.18,4.40 6.62,6.09 6.89,8.37 4.80,7.42 2.71,8.37 2.98,6.09 1.42,4.40 3.67,3.95" fill="#f5aa3a" stroke="#f5aa3a" stroke-width="1.3" stroke-linejoin="round"/><polygon points="14.60,1.95 15.73,3.95 17.98,4.40 16.42,6.09 16.69,8.37 14.60,7.42 12.51,8.37 12.78,6.09 11.22,4.40 13.47,3.95" fill="#f5aa3a" stroke="#f5aa3a" stroke-width="1.3" stroke-linejoin="round"/><polygon points="24.40,1.95 25.53,3.95 27.78,4.40 26.22,6.09 26.49,8.37 24.40,7.42 22.31,8.37 22.58,6.09 21.02,4.40 23.27,3.95" fill="#c8c8c8" stroke="#c8c8c8" stroke-width="1.3" stroke-linejoin="round"/><polygon points="34.20,1.95 35.33,3.95 37.58,4.40 36.02,6.09 36.29,8.37 34.20,7.42 32.11,8.37 32.38,6.09 30.82,4.40 33.07,3.95" fill="#c8c8c8" stroke="#c8c8c8" stroke-width="1.3" stroke-linejoin="round"/><polygon points="44.00,1.95 45.13,3.95 47.38,4.40 45.82,6.09 46.09,8.37 44.00,7.42 41.91,8.37 42.18,6.09 40.62,4.40 42.87,3.95" fill="#c8c8c8" stroke="#c8c8c8" stroke-width="1.3" stroke-linejoin="round"/></svg>
<span class="a lk" style="left:425.5px">进入项目 解散小组</span>
</div>
<svg class="a" style="left:0;top:0;width:507.2px;height:392px" viewBox="0 0 507.2 392"><rect x="0" y="18.90" width="507.2" height="1" fill="#e8e8ea"/><rect x="0" y="39.26" width="507.2" height="1" fill="#e8e8ea"/><rect x="0" y="59.62" width="507.2" height="1" fill="#e8e8ea"/><rect x="0" y="79.98" width="507.2" height="1" fill="#e8e8ea"/><rect x="0" y="100.34" width="507.2" height="1" fill="#e8e8ea"/><rect x="0" y="120.70" width="507.2" height="1" fill="#e8e8ea"/><rect x="0" y="141.06" width="507.2" height="1" fill="#e8e8ea"/><rect x="0" y="161.42" width="507.2" height="1" fill="#e8e8ea"/><rect x="0" y="181.78" width="507.2" height="1" fill="#e8e8ea"/><rect x="0" y="202.14" width="507.2" height="1" fill="#e8e8ea"/><rect x="0" y="222.50" width="507.2" height="1" fill="#e8e8ea"/><rect x="0" y="242.86" width="507.2" height="1" fill="#e8e8ea"/><rect x="0" y="263.22" width="507.2" height="1" fill="#e8e8ea"/><rect x="0" y="283.58" width="507.2" height="1" fill="#e8e8ea"/><rect x="0" y="303.94" width="507.2" height="1" fill="#e8e8ea"/><rect x="0" y="324.30" width="507.2" height="1" fill="#e8e8ea"/><rect x="0" y="344.66" width="507.2" height="1" fill="#e8e8ea"/><rect x="0" y="365.02" width="507.2" height="1" fill="#e8e8ea"/><rect x="0" y="385.38" width="507.2" height="1" fill="#e8e8ea"/></svg>
</div>
</div></body></html>
